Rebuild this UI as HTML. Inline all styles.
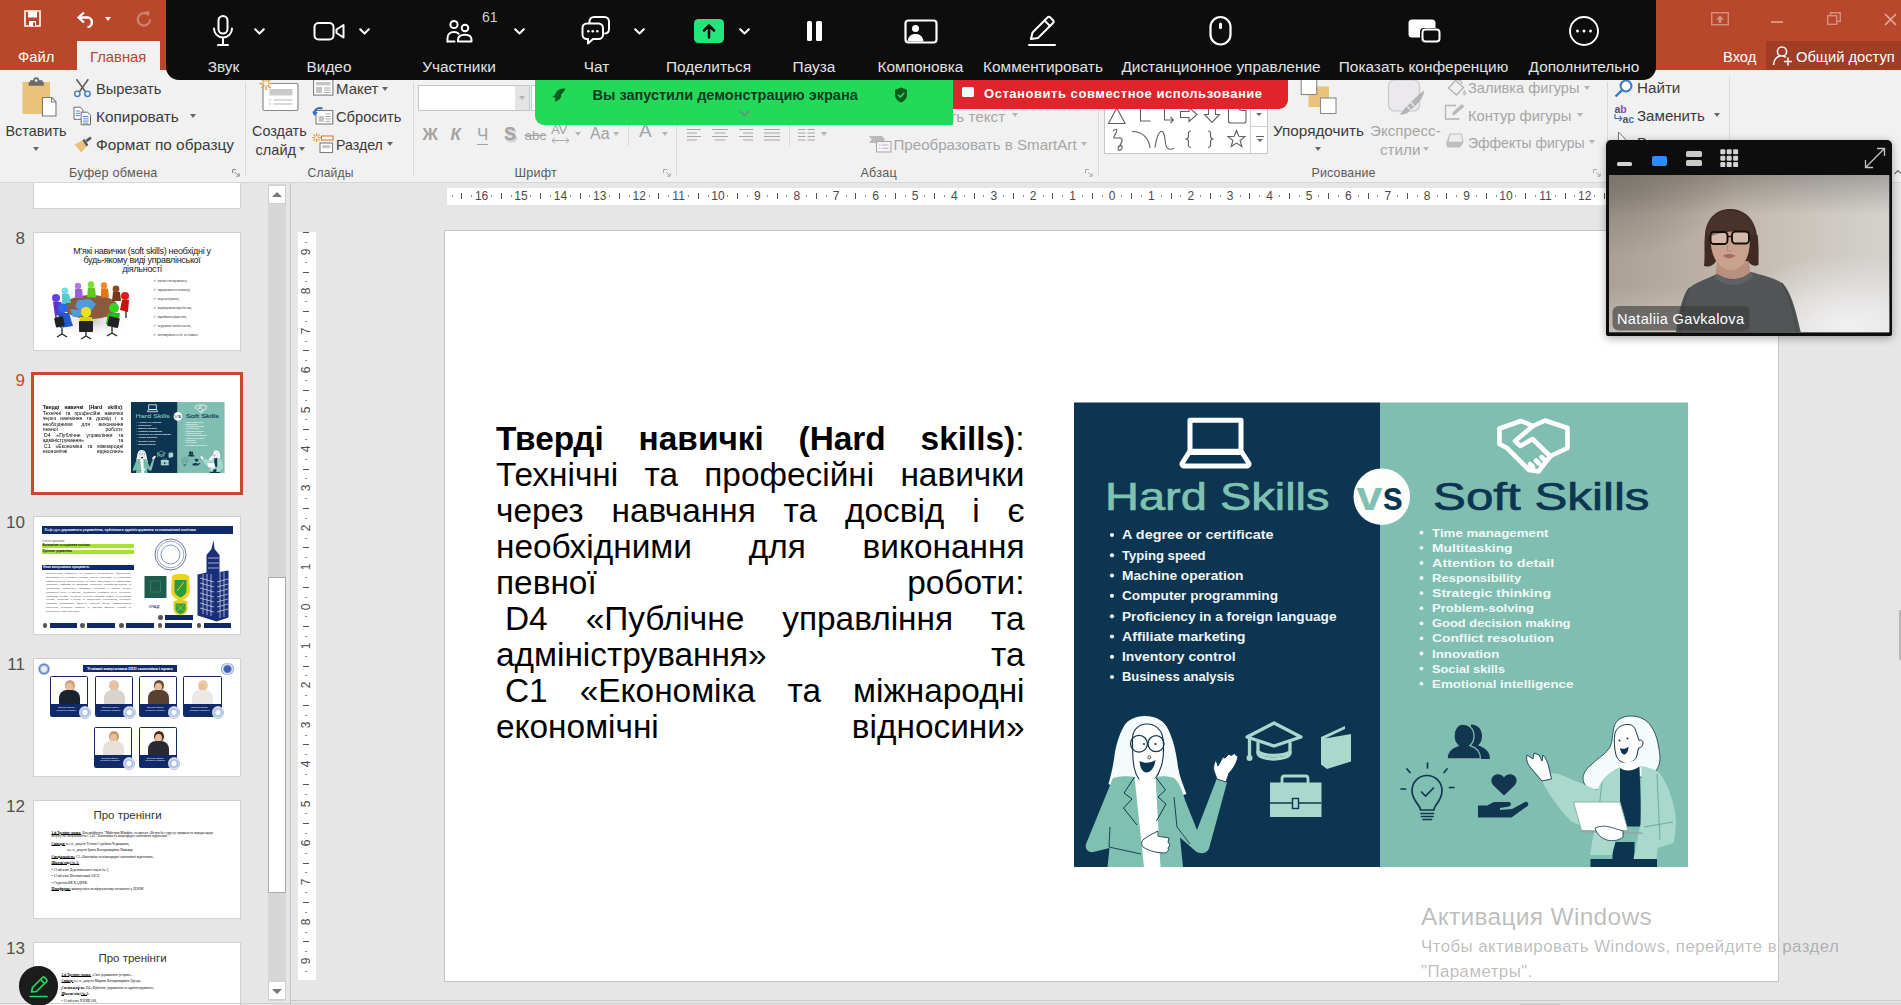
<!DOCTYPE html>
<html lang="ru">
<head>
<meta charset="utf-8">
<title>PowerPoint - Zoom share</title>
<style>
*{box-sizing:border-box;margin:0;padding:0}
html,body{width:1901px;height:1005px;overflow:hidden}
body{position:relative;background:#e6e6e6;font-family:"Liberation Sans","DejaVu Sans",sans-serif;color:#262626}
.abs{position:absolute}
#titlebar{left:0;top:0;width:1901px;height:70px;background:#b9472b}
#ribbon{left:0;top:70px;width:1901px;height:113px;background:#f1f1f1;border-bottom:1px solid #d6d6d6}
.tab{color:#fff;font-size:14.8px;line-height:20px;white-space:nowrap}
.rt{font-size:15px;line-height:18px;white-space:nowrap;color:#3b3b3b}
.rt.dis{color:#a6a6a6}
.rt,.grp{margin-top:1.2px}
.grp{font-size:12.5px;line-height:14px;color:#5a5a5a;white-space:nowrap;letter-spacing:.2px}
.vsep{width:1px;background:#d9d9d9;top:82px;height:94px}
.dd{width:0;height:0;border-left:3.5px solid transparent;border-right:3.5px solid transparent;border-top:4px solid #666}
.dd.dis{border-top-color:#b5b5b5}
#zoombar{left:166px;top:-12px;width:1490px;height:92px;background:#0d0d0d;border-radius:13px}
.zl{color:#e2e2e2;font-size:15.4px;line-height:18px;top:58px;white-space:nowrap;transform:translateX(-50%)}
.zi{stroke:#fff;fill:none;stroke-width:2;stroke-linecap:round;stroke-linejoin:round}
#slide{left:444px;top:230px;width:1335px;height:752px;background:#fff;border:1px solid #c4c4c4}
.sl{position:absolute;left:50px;width:528.5px;font-size:33.4px;line-height:36px;height:36px;text-align:justify;text-align-last:justify;color:#000;white-space:nowrap;overflow:visible}
.sl b{font-weight:bold}
.thumb{left:33px;width:208px;height:119px;background:#fff;border:1px solid #d0d0d0;overflow:hidden}
.t12{font-size:3.450px;line-height:3.600px;color:#000;font-family:"Liberation Serif",serif}
.t12>div{position:absolute;left:0;white-space:nowrap}
.t12 b{text-decoration:underline;text-decoration-thickness:.45px;text-underline-offset:.25px}
.tn{font-size:17px;line-height:20px;color:#4a4a4a;width:30px;text-align:right;left:-5px}
</style>
</head>
<body>

<!-- ===== PowerPoint title bar ===== -->
<div id="titlebar" class="abs">
  <!-- save -->
  <svg class="abs" style="left:24px;top:10px" width="17" height="17" viewBox="0 0 17 17"><path d="M1 1h15v15H1z" fill="none" stroke="#fff" stroke-width="1.6"/><rect x="4" y="1.5" width="9" height="6" fill="#fff"/><rect x="5" y="11" width="7" height="5" fill="#fff"/><rect x="9" y="12.5" width="2" height="3.5" fill="#b9472b"/></svg>
  <!-- undo -->
  <svg class="abs" style="left:76px;top:10px" width="21" height="18" viewBox="0 0 21 18"><path d="M8 2.5 L2.5 7.5 L8 12.5" fill="none" stroke="#fff" stroke-width="2.3" stroke-linejoin="miter"/><path d="M3 7.5h9.5a5 5 0 0 1 0 9.5h-1" fill="none" stroke="#fff" stroke-width="2.3"/></svg>
  <div class="abs" style="left:105px;top:17px;width:0;height:0;border-left:3.5px solid transparent;border-right:3.5px solid transparent;border-top:4px solid #fff"></div>
  <!-- redo (disabled) -->
  <svg class="abs" style="left:135px;top:10px;opacity:.32" width="18" height="18" viewBox="0 0 18 18"><path d="M12.5 4.2A6.2 6.2 0 1 0 15.2 9.5" fill="none" stroke="#fff" stroke-width="2.2"/><path d="M9.5 1.2l5.2 0.4-1.2 5z" fill="#fff"/></svg>
  <div class="abs tab" style="left:18px;top:47px">Файл</div>
  <div class="abs" style="left:77px;top:41px;width:83px;height:30px;background:#f1f1f1"></div>
  <div class="abs tab" style="left:90px;top:47px;color:#b7472a">Главная</div>
  <!-- window controls -->
  <svg class="abs" style="left:1711px;top:12px;opacity:.4" width="18" height="14" viewBox="0 0 18 14"><rect x=".7" y=".7" width="16.6" height="12" fill="none" stroke="#fff" stroke-width="1.4"/><path d="M9 3.5l4 4h-2.6v3.5H7.6V7.5H5z" fill="#fff"/></svg>
  <div class="abs" style="left:1771px;top:21px;width:12px;height:1.6px;background:#fff;opacity:.4"></div>
  <svg class="abs" style="left:1827px;top:12px;opacity:.4" width="14" height="13" viewBox="0 0 14 13"><rect x=".7" y="3.7" width="9" height="8.6" fill="none" stroke="#fff" stroke-width="1.4"/><path d="M3.5 3.5V.7h9.8v8.6h-3" fill="none" stroke="#fff" stroke-width="1.4"/></svg>
  <svg class="abs" style="left:1884px;top:13px;opacity:.55" width="13" height="13" viewBox="0 0 13 13"><path d="M1 1l11 11M12 1L1 12" stroke="#fff" stroke-width="1.7"/></svg>
  <div class="abs tab" style="left:1723px;top:47px;font-size:14.7px">Вход</div>
  <div class="abs" style="left:1766px;top:41px;width:135px;height:29px;background:#9f3d25"></div>
  <svg class="abs" style="left:1772px;top:45px" width="22" height="22" viewBox="0 0 22 22"><circle cx="10" cy="6.5" r="4.6" fill="none" stroke="#fff" stroke-width="1.5"/><path d="M1.5 20c.6-5.4 3.6-8.6 7-9M11 11c1 .2 2 .7 2.8 1.4" fill="none" stroke="#fff" stroke-width="1.5"/><path d="M16 12.5v8M12 16.5h8" stroke="#fff" stroke-width="1.5"/></svg>
  <div class="abs tab" style="left:1796px;top:47px;font-size:14.7px">Общий доступ</div>
</div>
<div id="ribbon" class="abs"></div>

<!-- ===== Ribbon content ===== -->
<div id="rb" class="abs" style="left:0;top:0;width:0;height:0">
  <!-- Clipboard group -->
  <svg class="abs" style="left:21px;top:76px" width="38" height="42" viewBox="0 0 38 42">
    <rect x="1.5" y="6" width="27.5" height="32" fill="#eac278"/>
    <path d="M9 6V4.2h3.2a3 3 0 0 1 6 0H21.5V6h1.3v3.8H7.7V6z" fill="#6b6b6b"/>
    <circle cx="15.2" cy="4.6" r="1.3" fill="#f1f1f1"/>
    <path d="M21.5 21.5h9.2l4.3 4.3V40H21.5z" fill="#fff" stroke="#7a7a7a" stroke-width="1.1"/>
    <path d="M30.5 21.7v4.3H35" fill="none" stroke="#7a7a7a" stroke-width="1"/>
  </svg>
  <div class="abs rt" style="left:5.5px;top:120.6px;font-size:14.4px">Вставить</div>
  <div class="abs dd" style="left:33px;top:147px"></div>
  <!-- scissors -->
  <svg class="abs" style="left:73px;top:78px" width="19" height="20" viewBox="0 0 19 20">
    <path d="M3.5 1.2l8.8 12.3M15.3 1.2L6.6 13.5" stroke="#5e5e5e" stroke-width="1.6" fill="none"/>
    <circle cx="4.3" cy="15.8" r="2.7" fill="none" stroke="#3f7ac2" stroke-width="1.4"/>
    <circle cx="14.5" cy="15.8" r="2.7" fill="none" stroke="#3f7ac2" stroke-width="1.4"/>
  </svg>
  <div class="abs rt" style="left:96px;top:79.3px;font-size:14.7px">Вырезать</div>
  <!-- copy -->
  <svg class="abs" style="left:73px;top:106px" width="19" height="20" viewBox="0 0 19 20">
    <path d="M1 1.2h6.3l2.5 2.5v9.6H1z" fill="#fff" stroke="#6a6a6a" stroke-width="1"/>
    <path d="M2.8 5h4.5M2.8 7.3h4.5M2.8 9.6h4.5" stroke="#3f7ac2" stroke-width=".9"/>
    <path d="M8.2 6.2h6.3l3 3v9.6H8.2z" fill="#fff" stroke="#6a6a6a" stroke-width="1"/>
    <path d="M10 10.5h5.5M10 12.8h5.5M10 15.1h5.5M10 17.2h5.5" stroke="#3f7ac2" stroke-width=".9"/>
  </svg>
  <div class="abs rt" style="left:96px;top:106.8px;font-size:15.4px">Копировать</div>
  <div class="abs dd" style="left:190px;top:114px"></div>
  <!-- format painter -->
  <svg class="abs" style="left:73px;top:135px" width="20" height="19" viewBox="0 0 20 19">
    <path d="M1.5 9.5L9 5.8l4.2 6.2-5 5.5z" fill="#eac278"/>
    <path d="M9.3 5.3l2.3-1.4 3.8 6-2.2 1.5z" fill="#5a5a5a"/>
    <path d="M12.5 5l4.7-3.6 1.6 2.3-4.8 3.5z" fill="#5a5a5a"/>
  </svg>
  <div class="abs rt" style="left:96px;top:134.8px;font-size:15.4px">Формат по образцу</div>
  <div class="abs grp" style="left:69px;top:165px;font-size:12.7px">Буфер обмена</div>
  <svg class="abs" style="left:232px;top:169px" width="8" height="8" viewBox="0 0 8 8"><path d="M.5 4V.5H4M3.2 3.2l3.8 3.8M7.2 4.2v3h-3" fill="none" stroke="#8a8a8a" stroke-width="1"/></svg>
  <div class="abs vsep" style="left:245px"></div>

  <!-- Slides group -->
  <svg class="abs" style="left:258px;top:76px" width="42" height="37" viewBox="0 0 42 37">
    <rect x="5" y="7.5" width="35" height="27" rx="1.5" fill="#fff" stroke="#8a8a8a" stroke-width="1.2"/>
    <rect x="11.5" y="13" width="23" height="6.5" fill="#c9c9c9"/>
    <path d="M11 24h2M15.5 24h19M11 28h2M15.5 28h19" stroke="#b5b5b5" stroke-width="1.1"/>
    <g stroke="#e9a23b" stroke-width="1.5"><path d="M8 1v13M1.5 7.5h13M3.4 2.9l9.2 9.2M12.6 2.9l-9.2 9.2"/></g>
    <circle cx="8" cy="7.5" r="2.4" fill="#f1f1f1"/>
  </svg>
  <div class="abs rt" style="left:252px;top:120.6px;font-size:14.4px">Создать</div>
  <div class="abs rt" style="left:255.5px;top:139.8px;font-size:14.6px">слайд</div>
  <div class="abs dd" style="left:298.5px;top:147px"></div>
  <!-- layout -->
  <svg class="abs" style="left:313px;top:79px" width="21" height="17" viewBox="0 0 21 17">
    <rect x=".6" y=".6" width="19.3" height="15.5" fill="#fff" stroke="#7d7d7d" stroke-width="1.1"/>
    <rect x="3" y="3" width="14.5" height="3.4" fill="#c4c4c4"/>
    <rect x="3" y="8" width="6" height="6" fill="#c4c4c4"/>
    <path d="M11 9h6.5M11 11.2h6.5M11 13.4h6.5" stroke="#9a9a9a" stroke-width=".9"/>
  </svg>
  <div class="abs rt" style="left:336px;top:79.3px">Макет</div>
  <div class="abs dd" style="left:381.5px;top:86.5px"></div>
  <!-- reset -->
  <svg class="abs" style="left:312px;top:105px" width="22" height="20" viewBox="0 0 22 20">
    <rect x="4" y="5.5" width="16.8" height="13.5" fill="#fff" stroke="#7d7d7d" stroke-width="1.1"/>
    <rect x="6.5" y="11" width="5.5" height="5.8" fill="#c4c4c4"/>
    <path d="M13.5 9h5M13.5 11.5h5M13.5 14h5M13.5 16.4h5" stroke="#9a9a9a" stroke-width=".9"/>
    <path d="M2.2 9.2C2 4.5 6 2 10.5 3.5" fill="none" stroke="#2f6fbf" stroke-width="1.9"/>
    <path d="M0 6.5l2.6 4.4 3.2-3.6z" fill="#2f6fbf"/>
  </svg>
  <div class="abs rt" style="left:336px;top:106.8px;font-size:14.7px">Сбросить</div>
  <!-- section -->
  <svg class="abs" style="left:312px;top:133px" width="22" height="21" viewBox="0 0 22 21">
    <g stroke="#e9a23b" stroke-width="1.2"><path d="M4.5 0v9M0 4.5h9M1.3 1.3l6.4 6.4M7.7 1.3L1.3 7.7"/></g>
    <circle cx="4.5" cy="4.500" r="1.6" fill="#f1f1f1"/>
    <rect x="9.5" y="3" width="11.5" height="4" fill="#fff" stroke="#e4763a" stroke-width="1.1"/>
    <rect x="8" y="10" width="12.5" height="9.5" fill="#fff" stroke="#7d7d7d" stroke-width="1.1"/>
    <rect x="10.300" y="12.200" width="8" height="3" fill="#c4c4c4"/>
  </svg>
  <div class="abs rt" style="left:336px;top:134.8px;font-size:14.2px">Раздел</div>
  <div class="abs dd" style="left:386.5px;top:142px"></div>
  <div class="abs grp" style="left:307.5px;top:165px;font-size:12.1px">Слайды</div>
  <div class="abs vsep" style="left:413px"></div>

  <!-- Font group -->
  <div class="abs" style="left:418px;top:85px;width:112px;height:26px;background:#fff;border:1px solid #c6c6c6"></div>
  <div class="abs" style="left:515px;top:86px;width:14px;height:24px;background:#e4e4e4"></div>
  <div class="abs dd dis" style="left:518.500px;top:96px"></div>
  <div class="abs" style="left:531px;top:85px;width:30px;height:26px;background:#fff;border:1px solid #c6c6c6"></div>
  <div class="abs" style="left:422.5px;top:125px;font-size:17px;line-height:20px;font-weight:bold;color:#a3a3a3">Ж</div>
  <div class="abs" style="left:450.5px;top:125px;font-size:17px;line-height:20px;font-weight:bold;font-style:italic;color:#a3a3a3">К</div>
  <div class="abs" style="left:477px;top:125px;font-size:17px;line-height:20px;color:#a3a3a3;border-bottom:1.300px solid #a3a3a3;height:19.500px">Ч</div>
  <div class="abs" style="left:504px;top:124px;font-size:18px;line-height:20px;font-weight:bold;color:#a3a3a3;text-shadow:1.500px 1.500px 1.500px #c9c9c9">S</div>
  <div class="abs" style="left:524.5px;top:126px;font-size:13.5px;line-height:20px;color:#a3a3a3;text-decoration:line-through">abc</div>
  <div class="abs" style="left:551px;top:121.500px;font-size:13.5px;line-height:16px;color:#a3a3a3;letter-spacing:-.5px">AV</div>
  <svg class="abs" style="left:551px;top:137px" width="19" height="7" viewBox="0 0 19 7"><path d="M1 3.500h17M4 .8L1 3.500l3 2.700M15 .8l3 2.700-3 2.700" fill="none" stroke="#a9a9a9" stroke-width="1"/></svg>
  <div class="abs dd dis" style="left:575px;top:132px"></div>
  <div class="abs" style="left:590px;top:124px;font-size:16px;line-height:20px;color:#a3a3a3">Aa</div>
  <div class="abs dd dis" style="left:613px;top:132px"></div>
  <div class="abs" style="left:628px;top:125px;width:1px;height:21px;background:#d9d9d9"></div>
  <div class="abs" style="left:639px;top:120px;font-size:19px;line-height:22px;color:#a3a3a3">A</div>
  <div class="abs dd dis" style="left:661.500px;top:132px"></div>
  <div class="abs grp" style="left:514.5px;top:165px;font-size:12.6px">Шрифт</div>
  <svg class="abs" style="left:663px;top:169px" width="8" height="8" viewBox="0 0 8 8"><path d="M.5 4V.5H4M3.2 3.2l3.8 3.8M7.2 4.2v3h-3" fill="none" stroke="#a9a9a9" stroke-width="1"/></svg>
  <div class="abs vsep" style="left:676px"></div>
  <!-- Paragraph group -->
  <svg class="abs" style="left:686px;top:129px" width="132" height="13" viewBox="0 0 132 13">
    <g stroke="#a6a6a6" stroke-width="1" fill="none">
      <path d="M1 .5h14M1 4h10M1 7.500h14M1 11h10"/>
      <path d="M26 .5h16M28.500 4h11M26 7.500h16M28.500 11h11"/>
      <path d="M53 .5h14M57 4h10M53 7.500h14M57 11h10"/>
      <path d="M78 .5h16M78 4h16M78 7.500h16M78 11h16"/>
      <path d="M112 .5h7.500M121.500 .5h7.500M112 4h7.500M121.500 4h7.500M112 7.500h7.500M121.500 7.500h7.500M112 11h7.500M121.500 11h7.500"/>
    </g>
  </svg>
  <div class="abs" style="left:789px;top:125px;width:1px;height:21px;background:#d9d9d9"></div>
  <div class="abs dd dis" style="left:820.5px;top:132px"></div>
  <div class="abs rt dis" style="left:941px;top:106.5px;font-size:15.3px">ать текст</div>
  <div class="abs dd dis" style="left:1012px;top:113px"></div>
  <svg class="abs" style="left:869px;top:136px" width="23" height="17" viewBox="0 0 23 17">
    <path d="M0 0h13l3 3.500-3 3.500H0l2.800-3.500z" fill="#b9b9b9"/>
    <rect x="7.500" y="5.500" width="14.500" height="10.500" fill="#f6f6f6" stroke="#a9a9a9" stroke-width="1.1"/>
    <path d="M10 9h1.500M13 9h6.500M10 12.300h1.500M13 12.300h6.500" stroke="#c9a9c9" stroke-width="1"/>
  </svg>
  <div class="abs rt dis" style="left:893.5px;top:134.8px;font-size:15.1px">Преобразовать в SmartArt</div>
  <div class="abs dd dis" style="left:1081px;top:142px"></div>
  <div class="abs grp" style="left:860.5px;top:165px;font-size:12.6px">Абзац</div>
  <svg class="abs" style="left:1085px;top:169px" width="8" height="8" viewBox="0 0 8 8"><path d="M.5 4V.5H4M3.2 3.2l3.8 3.800M7.200 4.200v3h-3" fill="none" stroke="#a9a9a9" stroke-width="1"/></svg>
  <div class="abs vsep" style="left:1098px"></div>

  <!-- Drawing group : shapes gallery -->
  <div class="abs" style="left:1104px;top:82px;width:164px;height:72px;background:#fff;border:1px solid #c6c6c6"></div>
  <div class="abs" style="left:1250px;top:83px;width:1px;height:70px;background:#d0d0d0"></div>
  <div class="abs" style="left:1251px;top:126px;width:16px;height:1px;background:#d0d0d0"></div>
  <svg class="abs" style="left:1105px;top:104px" width="146" height="48" viewBox="0 0 146 48">
    <g fill="none" stroke="#5f5f5f" stroke-width="1.100" stroke-linejoin="miter">
      <path d="M3.500 19.500L11.800 4l8.300 15.500z"/>
      <path d="M35.500 3v14h10"/>
      <path d="M59.500 3v13h8.500M65.500 13l2.800 3-2.800 3"/>
      <path d="M75.500 7.500h8.500V3.500l8 7-8 7v-4h-8.500z"/>
      <path d="M103.500 3.500h7v7h4l-7.500 8-7.500-8h4z"/>
      <path d="M123.500 3.500h10.500a3 3 0 0 0 3 3h4v10.500a2 2 0 0 1-2 2h-13.500a2 2 0 0 1-2-2z"/>
      <path d="M8 27c3-3 5-2 3 2s-4 5 0 5 7-1 6 3-4 6-4 8 3 2 4-1-2-3-4-1"/>
      <path d="M27 27.500c10 0 17 6 18 16.500"/>
      <path d="M50 43.500c3-20 9-20 10-8s5 10 9 9"/>
      <path d="M86 27c-3.500 0-2.500 3-2.500 5s-1 3-3 3c2 0 3 1 3 3s-1 5.500 2.500 5.500"/>
      <path d="M103 27c3.500 0 2.500 3 2.500 5s1 3 3 3c-2 0-3 1-3 3s1 5.500-2.500 5.500"/>
      <path d="M131.500 26.500l2.300 5.800 6.200.3-4.900 3.900 1.700 6-5.300-3.400-5.300 3.400 1.700-6-4.900-3.900 6.200-.3z"/>
    </g>
  </svg>
  <div class="abs dd" style="left:1256px;top:113px;border-left-width:3px;border-right-width:3px;border-top-width:3.500px"></div>
  <div class="abs" style="left:1255.500px;top:135.500px;width:8px;height:1.300px;background:#666"></div>
  <div class="abs dd" style="left:1256.5px;top:139px;border-left-width:3px;border-right-width:3px;border-top-width:3.500px"></div>
  <!-- arrange -->
  <svg class="abs" style="left:1300px;top:76px" width="38" height="40" viewBox="0 0 38 40">
    <rect x="8.500" y="10.500" width="20.500" height="20.500" fill="#eac278"/>
    <rect x="1.200" y="3" width="15.500" height="15.500" fill="#fff" stroke="#8a8a8a" stroke-width="1.100"/>
    <rect x="20.500" y="22" width="15.500" height="15.500" fill="#fff" stroke="#8a8a8a" stroke-width="1.100"/>
  </svg>
  <div class="abs rt" style="left:1273px;top:120.6px;font-size:15.3px">Упорядочить</div>
  <div class="abs dd" style="left:1315px;top:147px"></div>
  <!-- quick styles -->
  <svg class="abs" style="left:1386px;top:78px" width="40" height="40" viewBox="0 0 40 40">
    <rect x="2.500" y="2" width="31" height="31" rx="6" fill="#ebe8ee" stroke="#c9c9c9" stroke-width="1.200"/>
    <path d="M38 12.500c.5 6-6 13.500-13 19l-3.500-3.800C27 22 34 15 38 12.500z" fill="#b4b4b4"/>
    <path d="M20.500 28.500l3.500 3.700c-1.500 3.500-6 4.500-11 4.300 3-1.500 4.500-5 7.500-8z" fill="#b4b4b4"/>
    <path d="M24.500 24.200l3.600 3.800" stroke="#ebe8ee" stroke-width="1.400"/>
  </svg>
  <div class="abs rt dis" style="left:1370px;top:120.6px;font-size:15.2px">Экспресс-</div>
  <div class="abs rt dis" style="left:1380px;top:139.8px;font-size:15.2px">стили</div>
  <div class="abs dd dis" style="left:1422.500px;top:147px"></div>
  <!-- shape fill/outline/effects -->
  <svg class="abs" style="left:1447px;top:79px" width="20" height="19" viewBox="0 0 20 19"><path d="M8.500 1.500l8 7-7 7.500-8-7z" fill="none" stroke="#b3b3b3" stroke-width="1.300"/><path d="M10 1c3-.8 5 1 4.500 4" fill="none" stroke="#b3b3b3" stroke-width="1.200"/><path d="M17.500 10.500c1.300 2 1.800 3 1.800 4a1.700 1.700 0 0 1-3.500 0c0-1 .5-2 1.700-4z" fill="#c4c4c4"/></svg>
  <div class="abs rt dis" style="left:1468px;top:78.3px;font-size:14.600px">Заливка фигуры</div>
  <div class="abs dd dis" style="left:1583.500px;top:85.5px"></div>
  <svg class="abs" style="left:1444px;top:103px" width="22" height="19" viewBox="0 0 22 19"><path d="M12 2.500H1.500v13.500h14" fill="none" stroke="#b3b3b3" stroke-width="1.300"/><path d="M8 12.500l1-3.500 9-8 2.300 2.500-9 8z" fill="#b9b9b9"/></svg>
  <div class="abs rt dis" style="left:1468px;top:105.8px;font-size:14.800px">Контур фигуры</div>
  <div class="abs dd dis" style="left:1576.500px;top:113px"></div>
  <svg class="abs" style="left:1445px;top:132px" width="20" height="17" viewBox="0 0 20 17"><path d="M4.500 1.500h12.500l1.500 9-3.500 5H2.500L1 11.500z" fill="#bdbdbd"/><path d="M5.200 2.500h11l1 7.300H3.500z" fill="#ececec"/></svg>
  <div class="abs rt dis" style="left:1468px;top:132.6px;font-size:14px">Эффекты фигуры</div>
  <div class="abs dd dis" style="left:1588.500px;top:140px"></div>
  <div class="abs grp" style="left:1311.5px;top:165px;font-size:12.4px">Рисование</div>
  <svg class="abs" style="left:1593px;top:169px" width="8" height="8" viewBox="0 0 8 8"><path d="M.5 4V.5H4M3.200 3.200l3.800 3.800M7.200 4.200v3h-3" fill="none" stroke="#a9a9a9" stroke-width="1"/></svg>
  <div class="abs vsep" style="left:1606.5px"></div>

  <!-- Editing group -->
  <svg class="abs" style="left:1614px;top:79px" width="20" height="19" viewBox="0 0 20 19"><circle cx="12" cy="7" r="5.400" fill="#fff" stroke="#3b78c3" stroke-width="2"/><path d="M8 11.200L1.500 17.500" stroke="#3b78c3" stroke-width="2.400"/></svg>
  <div class="abs rt" style="left:1637px;top:78.3px;font-size:15.200px">Найти</div>
  <div class="abs" style="left:1614.500px;top:104px;font-size:10.500px;line-height:10px;color:#555;font-weight:bold">a<span style="color:#8b4fa5">b</span></div>
  <div class="abs" style="left:1622.500px;top:114px;font-size:10.500px;line-height:10px;color:#555;font-weight:bold">a<span style="color:#3b78c3">c</span></div>
  <svg class="abs" style="left:1614px;top:114px" width="9" height="9" viewBox="0 0 9 9"><path d="M1 0v4.500h6.500M5.500 2l2.300 2.500L5.500 7" fill="none" stroke="#3b78c3" stroke-width="1.200"/></svg>
  <div class="abs rt" style="left:1637px;top:105.8px;font-size:15.100px">Заменить</div>
  <div class="abs dd" style="left:1713.500px;top:113px"></div>
  <svg class="abs" style="left:1617px;top:131px" width="12" height="14" viewBox="0 0 12 14"><path d="M1.500 1l8.500 9H5.500L1.500 13z" fill="#fff" stroke="#777" stroke-width="1"/></svg>
  <div class="abs rt" style="left:1637px;top:133.200px;font-size:15.100px">Выделить</div>
  <div class="abs dd" style="left:1710px;top:141px"></div>
  <div class="abs vsep" style="left:1729px;top:76px;height:100px"></div>
</div>

<!-- ===== slide pane / workspace ===== -->
<!-- ===== slide thumbnails pane ===== -->
<div id="pane" class="abs" style="left:0;top:183px;width:290px;height:822px;overflow:hidden">
 <div class="abs" style="left:0;top:-183px;width:0;height:0">
  <div class="abs tn" style="top:228.5px;color:#505050">8</div>
  <div class="abs tn" style="top:370.5px;color:#c8492c">9</div>
  <div class="abs tn" style="top:512.5px;color:#505050">10</div>
  <div class="abs tn" style="top:654.5px;color:#505050">11</div>
  <div class="abs tn" style="top:796.5px;color:#505050">12</div>
  <div class="abs tn" style="top:938.5px;color:#505050">13</div>
  <div class="abs thumb" style="top:90px"></div>
  <div class="abs thumb" style="top:232px">
    <div class="abs" style="left:0;top:13.5px;width:208px;text-align:center;font-size:9px;line-height:9px;color:#222;letter-spacing:-.3px;transform:translateX(4px)">М’які навички (soft skills) необхідні у<br>будь-якому виді управлінської<br>діяльності</div>
    <svg class="abs" style="left:14px;top:48px" width="90" height="60" viewBox="0 0 90 60">
      <defs><radialGradient id="shd" cx="50%" cy="50%" r="50%"><stop offset="0" stop-color="#9a9a9a" stop-opacity=".55"/><stop offset="1" stop-color="#fff" stop-opacity="0"/></radialGradient></defs>
      <ellipse cx="44" cy="40" rx="42" ry="18" fill="url(#shd)"/>
      <ellipse cx="43" cy="26" rx="27" ry="12" fill="#8a5a3c"/>
      <path d="M30 19l12-1 6 5-4 6-12 1-5-5z" fill="#4f9be0"/><path d="M22 28l10 1 2 6-9 1z" fill="#4f9be0"/>
      <g><circle cx="8" cy="17" r="4" fill="#6a3fe0"/><path d="M5 21h8l4 12-10 2z" fill="#5b35d0"/>
      <circle cx="17" cy="10" r="3.4" fill="#6fe0e0"/><path d="M14 13h7l2 9h-9z" fill="#55c8d0"/>
      <circle cx="30" cy="5" r="3.2" fill="#b07be8"/><path d="M27 8h7l1 9h-8z" fill="#9a62d8"/>
      <circle cx="43" cy="3.500" r="3.2" fill="#7be030"/><path d="M40 6.500h7l1 10h-9z" fill="#62c81e"/>
      <circle cx="56" cy="4.500" r="3.200" fill="#f08a2a"/><path d="M53 7.500h7l1 9h-8z" fill="#e07818"/>
      <circle cx="68" cy="8" r="3.400" fill="#8a4a22"/><path d="M65 11h7l1 9h-9z" fill="#74391a"/>
      <circle cx="77" cy="15" r="4" fill="#e01a1a"/><path d="M74 19h7l-1 12-8-2z" fill="#c81010"/>
      <circle cx="15" cy="27" r="4.800" fill="#2a6ae8"/><path d="M10 32h11l4 13-13 2z" fill="#1f58d0"/>
      <circle cx="38" cy="31" r="5.200" fill="#e8e020"/><path d="M32 36h12l1 14h-14z" fill="#d8cf10"/>
      <circle cx="66" cy="27" r="5" fill="#38d028"/><path d="M60 32h12l-2 14-12-3z" fill="#28b818"/></g>
      <g stroke="#222" stroke-width="1.300" fill="none"><path d="M14 47v6M9 56l5-3 5 3M38 50v5M33 58l5-3 5 3M64 46v6M59 55l5-3 5 3M78 30v7M8 35v8"/></g>
      <g fill="#222"><rect x="31" y="40" width="14" height="11" rx="1"/><rect x="7" y="36" width="9" height="10" rx="1" transform="rotate(-12 11 41)"/><rect x="60" y="36" width="11" height="10" rx="1" transform="rotate(12 65 41)"/></g>
    </svg>
    <div class="abs" style="left:119px;top:45.3px;font-size:3.6px;line-height:5px;color:#333;white-space:nowrap;font-family:'Liberation Serif',serif"><span style="font-size:4px">✓</span>&nbsp; вміти спілкуватись,</div>
    <div class="abs" style="left:119px;top:54.3px;font-size:3.6px;line-height:5px;color:#333;white-space:nowrap;font-family:'Liberation Serif',serif"><span style="font-size:4px">✓</span>&nbsp; працювати в команді,</div>
    <div class="abs" style="left:119px;top:63.3px;font-size:3.6px;line-height:5px;color:#333;white-space:nowrap;font-family:'Liberation Serif',serif"><span style="font-size:4px">✓</span>&nbsp; переконувати,</div>
    <div class="abs" style="left:119px;top:72.3px;font-size:3.6px;line-height:5px;color:#333;white-space:nowrap;font-family:'Liberation Serif',serif"><span style="font-size:4px">✓</span>&nbsp; вирішувати проблеми,</div>
    <div class="abs" style="left:119px;top:81.3px;font-size:3.6px;line-height:5px;color:#333;white-space:nowrap;font-family:'Liberation Serif',serif"><span style="font-size:4px">✓</span>&nbsp; приймати рішення,</div>
    <div class="abs" style="left:119px;top:90.3px;font-size:3.6px;line-height:5px;color:#333;white-space:nowrap;font-family:'Liberation Serif',serif"><span style="font-size:4px">✓</span>&nbsp; керувати своїм часом,</div>
    <div class="abs" style="left:119px;top:99.3px;font-size:3.6px;line-height:5px;color:#333;white-space:nowrap;font-family:'Liberation Serif',serif"><span style="font-size:4px">✓</span>&nbsp; мотивувати себе та інших.</div>
  </div>
  <div class="abs" style="left:31.200px;top:372.200px;width:211.500px;height:122.500px;background:#c8492c"></div>
  <div class="abs thumb" style="top:375px;border:none;left:34px;width:206px;height:116.800px">
    <div class="abs" style="left:1.200px;top:1.200px;width:1334px;height:751px;transform-origin:0 0;transform:scale(.1527)">
      <div class="sl" style="top:189px"><b>Тверді навичкі (Hard skills)</b>:</div>
      <div class="sl" style="top:225px">Технічні та професійні навички</div>
      <div class="sl" style="top:261px">через навчання та досвід і є</div>
      <div class="sl" style="top:297px">необхідними для виконання</div>
      <div class="sl" style="top:333px">певної роботи:</div>
      <div class="sl" style="top:369px;padding-left:9px">D4 «Публічне управління та</div>
      <div class="sl" style="top:405px">адміністрування» та</div>
      <div class="sl" style="top:441px;padding-left:9px">С1 «Економіка та міжнародні</div>
      <div class="sl" style="top:477px">економічні відносини»</div>
      <svg class="abs" style="left:628px;top:170px" width="614" height="465" viewBox="0 0 614 465"><use href="#infog"/></svg>
    </div>
  </div>
  <div class="abs thumb" style="top:516px"><div class="abs" style="left:-1px;top:-1px;width:0;height:0">
    <div class="abs" style="left:9px;top:9.500px;width:190.500px;height:8px;background:#10296b"></div>
    <div class="abs" style="left:11.500px;top:10.500px;font-size:4.300px;line-height:6px;color:#fff;white-space:nowrap;font-family:'Liberation Serif',serif">Кафедра <b style="font-family:'Liberation Sans',sans-serif;font-size:3.500px">державного управління, публічного адміністрування та економічної політики</b></div>
    <div class="abs" style="left:9px;top:22.500px;font-size:2.800px;line-height:4px;color:#666;white-space:nowrap">Освітні програми:</div>
    <div class="abs" style="left:9px;top:28px;width:92px;height:3.800px;background:#a5e32f"></div>
    <div class="abs" style="left:9.500px;top:28px;font-size:2.800px;line-height:3.800px;color:#111;font-weight:bold;white-space:nowrap">Економічна та соціальна політика</div>
    <div class="abs" style="left:9px;top:34px;width:92px;height:3.800px;background:#a5e32f"></div>
    <div class="abs" style="left:9.500px;top:34px;font-size:2.800px;line-height:3.800px;color:#111;font-weight:bold;white-space:nowrap">Публічне управління</div>
    <div class="abs" style="left:9px;top:48.500px;width:92px;height:5.800px;background:#10296b"></div>
    <div class="abs" style="left:10px;top:49px;font-size:3.300px;line-height:5px;color:#fff;font-weight:bold;white-space:nowrap">Наші випускники працюють:</div>
    <div class="abs" style="left:13px;top:56px;width:85px;font-size:2.750px;line-height:3.750px;color:#1a1a1a;text-align:justify;font-family:'Liberation Serif',serif">спеціалістами провідних та головних підприємства, банківських, фінансових та страхових установ, органів місцевого та державного самоврядування, органів влади та інших організацій та промислової діяльності, роботою за кордоном; начальник науково-дослідного та державного управління, посадовий інспектор з аналізу ринків, державний агент із закупок, державний страховий агент, спеціаліст державної служби, спеціаліст з питань кадрової роботи та державної служби, інспектор з кадрів та соціального страхування, керуючий справами виконавчого комітету, секретар органу самоорганізації населення, керівники проектів та програм, фахівець установ та організацій, публічної влади.</div>
    <svg class="abs" style="left:108px;top:20px" width="95" height="95" viewBox="0 0 95 95">
      <circle cx="29.500" cy="18.500" r="15.500" fill="#fff" stroke="#3b4f8f" stroke-width=".8"/><circle cx="29.500" cy="18.500" r="13.300" fill="none" stroke="#3b4f8f" stroke-width=".5"/><circle cx="29.500" cy="18.500" r="9.500" fill="none" stroke="#3b4f8f" stroke-width=".6"/>
      <rect x="3.500" y="40" width="22" height="22" fill="#1f5b4b"/><rect x="9.500" y="45" width="10" height="11" fill="none" stroke="#4f8b78" stroke-width=".6"/>
      <path d="M31 40c3-3 14-3 17 0l1 14c0 6-4 9-9.500 11C34 63 30 60 30 54z" fill="#f0d21e"/><path d="M33.500 44h12v10c0 4-3 6-6 7.500-3-1.500-6-3.500-6-7.500z" fill="#2a9a3c"/><path d="M36 55l7-9" stroke="#f0d21e" stroke-width="1"/>
      <path d="M32.500 65.500c2-2 12-2 14 0v7c0 4-3 6-7 7-4-1-7-3-7-7z" fill="#e0d020"/><path d="M34.500 67.500h10v5c0 3-2 4.500-5 5.500-3-1-5-2.500-5-5.500z" fill="#32a040"/><path d="M36.500 75l6-6M36.500 69l6 6" stroke="#e0d020" stroke-width=".7"/>
      <g fill="#1a2f7a"><path d="M72.500 4l1 9 5 6v17l9-1.500v47l-12 4-19-6V38.500l9-2V19l5-6z"/></g>
      <g stroke="#fff" stroke-width=".7" opacity=".85"><path d="M59 42l14 4M59 47l14 4M59 52l14 4M59 57l14 4M59 62l14 4M59 67l14 4M59 72l14 4M76 46l11-3M76 51l11-3M76 56l11-3M76 61l11-3M76 66l11-3M76 71l11-3M76 76l11-3M62 38v40M66 38v41M70 38v42M79 36v46M83 36v45M67 22h11M67 27h11M67 32h11"/></g>
      <text x="8" y="72" font-size="3.200" fill="#2a3f9a" font-weight="bold" font-family="Liberation Sans, sans-serif">ОЧАДІ</text>
    </svg>
    <div class="abs" style="left:131.500px;top:98.500px;width:28px;height:5.500px;background:#10296b"></div>
    <div class="abs" style="left:16.5px;top:107px;width:27.500px;height:5.300px;background:#10296b"></div><div class="abs" style="left:9.5px;top:107.300px;width:4.500px;height:4.500px;border-radius:50%;background:#555"></div>
    <div class="abs" style="left:54.3px;top:107px;width:27.500px;height:5.300px;background:#10296b"></div><div class="abs" style="left:47.3px;top:107.300px;width:4.500px;height:4.500px;border-radius:50%;background:#555"></div>
    <div class="abs" style="left:93px;top:107px;width:27.500px;height:5.300px;background:#10296b"></div><div class="abs" style="left:86px;top:107.300px;width:4.500px;height:4.500px;border-radius:50%;background:#555"></div>
    <div class="abs" style="left:131.5px;top:107px;width:27.500px;height:5.300px;background:#10296b"></div><div class="abs" style="left:124.5px;top:107.300px;width:4.500px;height:4.500px;border-radius:50%;background:#555"></div>
    <div class="abs" style="left:170.7px;top:107px;width:27.500px;height:5.300px;background:#10296b"></div><div class="abs" style="left:163.7px;top:107.300px;width:4.500px;height:4.500px;border-radius:50%;background:#555"></div>
    <div class="abs" style="left:125px;top:99px;width:4.500px;height:4.500px;border-radius:50%;background:#555"></div>
  </div></div>
  <div class="abs thumb" style="top:658px"><div class="abs" style="left:-1px;top:-1.200px;width:0;height:0">
    <div class="abs" style="left:50px;top:7.500px;width:93.500px;height:6.800px;background:#10296b"></div>
    <div class="abs" style="left:50px;top:8px;width:93.500px;text-align:center;font-size:4.300px;line-height:6px;color:#fff;font-weight:bold;white-space:nowrap;font-family:'Liberation Serif',serif">Успішні випускники ННІ економіки і права</div>
    <div class="abs" style="left:4.500px;top:5px;width:12.500px;height:12.500px;border-radius:50%;background:radial-gradient(circle,#e8eef8 30%,#5f7fc0 55%,#dfe6f4 75%)"></div>
    <div class="abs" style="left:188px;top:5px;width:12.500px;height:12.500px;border-radius:50%;background:radial-gradient(circle,#3f5fb0 35%,#e8eef8 55%,#5f7fc0 75%)"></div>
    <div class="abs" style="left:17.3px;top:18px;width:38.200px;height:41px;border:.8px solid #10296b;border-radius:1.500px;background:#fff;overflow:hidden">
      <div class="abs" style="left:13.500px;top:3.500px;width:10px;height:11px;border-radius:50%;background:#c9a07a"></div>
      <div class="abs" style="left:15px;top:6px;width:7px;height:8.500px;border-radius:50%;background:#e8c0a0"></div>
      <div class="abs" style="left:8px;top:13px;width:21px;height:20px;border-radius:8px 8px 0 0;background:#1a2230"></div>
      <div class="abs" style="left:0;top:27px;width:38px;height:14px;background:#10296b"></div>
      <div class="abs" style="left:2px;top:29.500px;width:26px;font-size:1.800px;line-height:2.200px;color:#fff;text-align:center">Випускник кафедри державного управління</div>
    </div>
    <div class="abs" style="left:45.8px;top:48.5px;width:12.500px;height:12.500px;border-radius:50%;background:radial-gradient(circle,#fff 25%,#9fb4dc 50%,#e8eef8 70%);border:.5px solid #b8c4dc"></div>
    <div class="abs" style="left:61.5px;top:18px;width:38.200px;height:41px;border:.8px solid #10296b;border-radius:1.500px;background:#fff;overflow:hidden">
      <div class="abs" style="left:13.500px;top:3.500px;width:10px;height:11px;border-radius:50%;background:#e0c9a8"></div>
      <div class="abs" style="left:15px;top:6px;width:7px;height:8.500px;border-radius:50%;background:#e8c0a0"></div>
      <div class="abs" style="left:8px;top:13px;width:21px;height:20px;border-radius:8px 8px 0 0;background:#d9d3d0"></div>
      <div class="abs" style="left:0;top:27px;width:38px;height:14px;background:#10296b"></div>
      <div class="abs" style="left:2px;top:29.500px;width:26px;font-size:1.800px;line-height:2.200px;color:#fff;text-align:center">Випускник кафедри державного управління</div>
    </div>
    <div class="abs" style="left:90.0px;top:48.5px;width:12.500px;height:12.500px;border-radius:50%;background:radial-gradient(circle,#fff 25%,#9fb4dc 50%,#e8eef8 70%);border:.5px solid #b8c4dc"></div>
    <div class="abs" style="left:106.3px;top:18px;width:38.200px;height:41px;border:.8px solid #10296b;border-radius:1.500px;background:#fff;overflow:hidden">
      <div class="abs" style="left:13.500px;top:3.500px;width:10px;height:11px;border-radius:50%;background:#6a4a34"></div>
      <div class="abs" style="left:15px;top:6px;width:7px;height:8.500px;border-radius:50%;background:#e8c0a0"></div>
      <div class="abs" style="left:8px;top:13px;width:21px;height:20px;border-radius:8px 8px 0 0;background:#5a4030"></div>
      <div class="abs" style="left:0;top:27px;width:38px;height:14px;background:#10296b"></div>
      <div class="abs" style="left:2px;top:29.500px;width:26px;font-size:1.800px;line-height:2.200px;color:#fff;text-align:center">Випускник кафедри державного управління</div>
    </div>
    <div class="abs" style="left:134.8px;top:48.5px;width:12.500px;height:12.500px;border-radius:50%;background:radial-gradient(circle,#fff 25%,#9fb4dc 50%,#e8eef8 70%);border:.5px solid #b8c4dc"></div>
    <div class="abs" style="left:150.4px;top:18px;width:38.200px;height:41px;border:.8px solid #10296b;border-radius:1.500px;background:#fff;overflow:hidden">
      <div class="abs" style="left:13.500px;top:3.500px;width:10px;height:11px;border-radius:50%;background:#e8d0a0"></div>
      <div class="abs" style="left:15px;top:6px;width:7px;height:8.500px;border-radius:50%;background:#e8c0a0"></div>
      <div class="abs" style="left:8px;top:13px;width:21px;height:20px;border-radius:8px 8px 0 0;background:#ece8e6"></div>
      <div class="abs" style="left:0;top:27px;width:38px;height:14px;background:#10296b"></div>
      <div class="abs" style="left:2px;top:29.500px;width:26px;font-size:1.800px;line-height:2.200px;color:#fff;text-align:center">Випускник кафедри державного управління</div>
    </div>
    <div class="abs" style="left:178.9px;top:48.5px;width:12.500px;height:12.500px;border-radius:50%;background:radial-gradient(circle,#fff 25%,#9fb4dc 50%,#e8eef8 70%);border:.5px solid #b8c4dc"></div>
    <div class="abs" style="left:61px;top:68.7px;width:38.200px;height:41px;border:.8px solid #10296b;border-radius:1.500px;background:#fff;overflow:hidden">
      <div class="abs" style="left:13.500px;top:3.500px;width:10px;height:11px;border-radius:50%;background:#c89a6a"></div>
      <div class="abs" style="left:15px;top:6px;width:7px;height:8.500px;border-radius:50%;background:#e8c0a0"></div>
      <div class="abs" style="left:8px;top:13px;width:21px;height:20px;border-radius:8px 8px 0 0;background:#e6e0d8"></div>
      <div class="abs" style="left:0;top:27px;width:38px;height:14px;background:#10296b"></div>
      <div class="abs" style="left:2px;top:29.500px;width:26px;font-size:1.800px;line-height:2.200px;color:#fff;text-align:center">Випускник кафедри державного управління</div>
    </div>
    <div class="abs" style="left:89.5px;top:99.2px;width:12.500px;height:12.500px;border-radius:50%;background:radial-gradient(circle,#fff 25%,#9fb4dc 50%,#e8eef8 70%);border:.5px solid #b8c4dc"></div>
    <div class="abs" style="left:106px;top:68.7px;width:38.200px;height:41px;border:.8px solid #10296b;border-radius:1.500px;background:#fff;overflow:hidden">
      <div class="abs" style="left:13.500px;top:3.500px;width:10px;height:11px;border-radius:50%;background:#4a2a1a"></div>
      <div class="abs" style="left:15px;top:6px;width:7px;height:8.500px;border-radius:50%;background:#e8c0a0"></div>
      <div class="abs" style="left:8px;top:13px;width:21px;height:20px;border-radius:8px 8px 0 0;background:#2a2a30"></div>
      <div class="abs" style="left:0;top:27px;width:38px;height:14px;background:#10296b"></div>
      <div class="abs" style="left:2px;top:29.500px;width:26px;font-size:1.800px;line-height:2.200px;color:#fff;text-align:center">Випускник кафедри державного управління</div>
    </div>
    <div class="abs" style="left:134.5px;top:99.2px;width:12.500px;height:12.500px;border-radius:50%;background:radial-gradient(circle,#fff 25%,#9fb4dc 50%,#e8eef8 70%);border:.5px solid #b8c4dc"></div>
  </div></div>
  <div class="abs thumb" style="top:800px">
    <div class="abs" style="left:0;top:7px;width:208px;text-align:center;font-size:11.500px;line-height:14px;color:#333;transform:translateX(-10.500px)">Про тренінги</div>
    <div class="abs t12" style="left:17.500px;top:0;width:176px">
      <div style="top:30.600px;width:172px;white-space:normal"><b>1-й Тренінг: назва:</b> Для майбутніх “Майстрів Міжфін» та проект «Вступ без стресу: правила та поради щодо вступу на спеціальність С1.01 “Економіка та міжнародні економічні відносини”.</div>
      <div style="top:41.700px"><b>Спікери:</b> к.е.н., доцент Тетяна Сергіївна Черкашина,</div>
      <div style="top:47.700px;padding-left:16px">к.е.н., доцент Ірина Володимирівна Пивавар</div>
      <div style="top:55px"><b>Спеціальність:</b> С1 «Економіка та міжнародні економічні відносини»</div>
      <div style="top:61px"><b>Школи/ліцеї № 1:</b></div>
      <div style="top:67.800px">•  11-ий клас Дергачівського ліцею № 3,</div>
      <div style="top:73.800px">•  11-ий клас Пісочинський ЗЗСО,</div>
      <div style="top:80.600px">•  Студенти ВК ХАДІФК.</div>
      <div style="top:87.100px"><b>Платформа:</b> виконується на віртуальному посиланні у ZOOM</div>
    </div>
  </div>
  <div class="abs thumb" style="top:942px">
    <div class="abs" style="left:0;top:7.500px;width:208px;text-align:center;font-size:11.500px;line-height:14px;color:#333;transform:translateX(-5.500px)">Про тренінги</div>
    <div class="abs t12" style="left:27.500px;top:0;width:150px">
      <div style="top:30.700px"><b>2-й Тренінг: назва:</b> «Світ державного устрою».</div>
      <div style="top:36.700px"><b>Спікер:</b> к.е.н., доцент Марина Володимирівна Груздь</div>
      <div style="top:43.500px"><b>Спеціальність:</b> D4 «Публічне управління та адміністрування»</div>
      <div style="top:49.500px"><b>Школи/ліцеї № 2:</b></div>
      <div style="top:57px">• 11-ий клас ХЗОШ 168,</div>
    </div>
  </div>
  <div class="abs" style="left:267.500px;top:184px;width:18.500px;height:817px;background:#d6d6d6"></div>
  <div class="abs" style="left:267.500px;top:185px;width:18.500px;height:18.500px;background:#fff;border:1px solid #cfcfcf"></div>
  <div class="abs" style="left:271.500px;top:192px;width:0;height:0;border-left:5px solid transparent;border-right:5px solid transparent;border-bottom:5px solid #777"></div>
  <div class="abs" style="left:267.500px;top:577px;width:18.500px;height:315.500px;background:#fff;border:1px solid #ababab"></div>
  <div class="abs" style="left:267.500px;top:981px;width:18.500px;height:18.500px;background:#fff;border:1px solid #cfcfcf"></div>
  <div class="abs" style="left:271.500px;top:988.500px;width:0;height:0;border-left:5px solid transparent;border-right:5px solid transparent;border-top:5px solid #777"></div>
 </div>
</div>
<div class="abs" style="left:290px;top:183px;width:1px;height:822px;background:#c3c3c3"></div>
<!-- ===== rulers ===== -->
<div class="abs" style="left:447px;top:188px;width:1332px;height:16.500px;background:#fff;overflow:hidden;font-size:12px;line-height:16.500px;color:#4a4a4a">
 <i class="abs" style="left:14px;top:5px;width:1px;height:6px;background:#555"></i>
 <i class="abs" style="left:5px;top:7px;width:1px;height:2px;background:#8a8a8a"></i>
 <i class="abs" style="left:24px;top:7px;width:1px;height:2px;background:#8a8a8a"></i>
 <span class="abs" style="left:34.6px;top:0;transform:translateX(-50%)">16</span>
 <i class="abs" style="left:54px;top:5px;width:1px;height:6px;background:#555"></i>
 <i class="abs" style="left:44px;top:7px;width:1px;height:2px;background:#8a8a8a"></i>
 <i class="abs" style="left:64px;top:7px;width:1px;height:2px;background:#8a8a8a"></i>
 <span class="abs" style="left:74.0px;top:0;transform:translateX(-50%)">15</span>
 <i class="abs" style="left:93px;top:5px;width:1px;height:6px;background:#555"></i>
 <i class="abs" style="left:83px;top:7px;width:1px;height:2px;background:#8a8a8a"></i>
 <i class="abs" style="left:103px;top:7px;width:1px;height:2px;background:#8a8a8a"></i>
 <span class="abs" style="left:113.4px;top:0;transform:translateX(-50%)">14</span>
 <i class="abs" style="left:133px;top:5px;width:1px;height:6px;background:#555"></i>
 <i class="abs" style="left:123px;top:7px;width:1px;height:2px;background:#8a8a8a"></i>
 <i class="abs" style="left:142px;top:7px;width:1px;height:2px;background:#8a8a8a"></i>
 <span class="abs" style="left:152.8px;top:0;transform:translateX(-50%)">13</span>
 <i class="abs" style="left:172px;top:5px;width:1px;height:6px;background:#555"></i>
 <i class="abs" style="left:162px;top:7px;width:1px;height:2px;background:#8a8a8a"></i>
 <i class="abs" style="left:182px;top:7px;width:1px;height:2px;background:#8a8a8a"></i>
 <span class="abs" style="left:192.2px;top:0;transform:translateX(-50%)">12</span>
 <i class="abs" style="left:211px;top:5px;width:1px;height:6px;background:#555"></i>
 <i class="abs" style="left:202px;top:7px;width:1px;height:2px;background:#8a8a8a"></i>
 <i class="abs" style="left:221px;top:7px;width:1px;height:2px;background:#8a8a8a"></i>
 <span class="abs" style="left:231.6px;top:0;transform:translateX(-50%)">11</span>
 <i class="abs" style="left:251px;top:5px;width:1px;height:6px;background:#555"></i>
 <i class="abs" style="left:241px;top:7px;width:1px;height:2px;background:#8a8a8a"></i>
 <i class="abs" style="left:261px;top:7px;width:1px;height:2px;background:#8a8a8a"></i>
 <span class="abs" style="left:271.0px;top:0;transform:translateX(-50%)">10</span>
 <i class="abs" style="left:290px;top:5px;width:1px;height:6px;background:#555"></i>
 <i class="abs" style="left:280px;top:7px;width:1px;height:2px;background:#8a8a8a"></i>
 <i class="abs" style="left:300px;top:7px;width:1px;height:2px;background:#8a8a8a"></i>
 <span class="abs" style="left:310.4px;top:0;transform:translateX(-50%)">9</span>
 <i class="abs" style="left:330px;top:5px;width:1px;height:6px;background:#555"></i>
 <i class="abs" style="left:320px;top:7px;width:1px;height:2px;background:#8a8a8a"></i>
 <i class="abs" style="left:339px;top:7px;width:1px;height:2px;background:#8a8a8a"></i>
 <span class="abs" style="left:349.8px;top:0;transform:translateX(-50%)">8</span>
 <i class="abs" style="left:369px;top:5px;width:1px;height:6px;background:#555"></i>
 <i class="abs" style="left:359px;top:7px;width:1px;height:2px;background:#8a8a8a"></i>
 <i class="abs" style="left:379px;top:7px;width:1px;height:2px;background:#8a8a8a"></i>
 <span class="abs" style="left:389.2px;top:0;transform:translateX(-50%)">7</span>
 <i class="abs" style="left:408px;top:5px;width:1px;height:6px;background:#555"></i>
 <i class="abs" style="left:399px;top:7px;width:1px;height:2px;background:#8a8a8a"></i>
 <i class="abs" style="left:418px;top:7px;width:1px;height:2px;background:#8a8a8a"></i>
 <span class="abs" style="left:428.6px;top:0;transform:translateX(-50%)">6</span>
 <i class="abs" style="left:448px;top:5px;width:1px;height:6px;background:#555"></i>
 <i class="abs" style="left:438px;top:7px;width:1px;height:2px;background:#8a8a8a"></i>
 <i class="abs" style="left:458px;top:7px;width:1px;height:2px;background:#8a8a8a"></i>
 <span class="abs" style="left:468.0px;top:0;transform:translateX(-50%)">5</span>
 <i class="abs" style="left:487px;top:5px;width:1px;height:6px;background:#555"></i>
 <i class="abs" style="left:477px;top:7px;width:1px;height:2px;background:#8a8a8a"></i>
 <i class="abs" style="left:497px;top:7px;width:1px;height:2px;background:#8a8a8a"></i>
 <span class="abs" style="left:507.4px;top:0;transform:translateX(-50%)">4</span>
 <i class="abs" style="left:527px;top:5px;width:1px;height:6px;background:#555"></i>
 <i class="abs" style="left:517px;top:7px;width:1px;height:2px;background:#8a8a8a"></i>
 <i class="abs" style="left:536px;top:7px;width:1px;height:2px;background:#8a8a8a"></i>
 <span class="abs" style="left:546.8px;top:0;transform:translateX(-50%)">3</span>
 <i class="abs" style="left:566px;top:5px;width:1px;height:6px;background:#555"></i>
 <i class="abs" style="left:556px;top:7px;width:1px;height:2px;background:#8a8a8a"></i>
 <i class="abs" style="left:576px;top:7px;width:1px;height:2px;background:#8a8a8a"></i>
 <span class="abs" style="left:586.2px;top:0;transform:translateX(-50%)">2</span>
 <i class="abs" style="left:605px;top:5px;width:1px;height:6px;background:#555"></i>
 <i class="abs" style="left:596px;top:7px;width:1px;height:2px;background:#8a8a8a"></i>
 <i class="abs" style="left:615px;top:7px;width:1px;height:2px;background:#8a8a8a"></i>
 <span class="abs" style="left:625.6px;top:0;transform:translateX(-50%)">1</span>
 <i class="abs" style="left:645px;top:5px;width:1px;height:6px;background:#555"></i>
 <i class="abs" style="left:635px;top:7px;width:1px;height:2px;background:#8a8a8a"></i>
 <i class="abs" style="left:655px;top:7px;width:1px;height:2px;background:#8a8a8a"></i>
 <span class="abs" style="left:665.0px;top:0;transform:translateX(-50%)">0</span>
 <i class="abs" style="left:684px;top:5px;width:1px;height:6px;background:#555"></i>
 <i class="abs" style="left:674px;top:7px;width:1px;height:2px;background:#8a8a8a"></i>
 <i class="abs" style="left:694px;top:7px;width:1px;height:2px;background:#8a8a8a"></i>
 <span class="abs" style="left:704.4px;top:0;transform:translateX(-50%)">1</span>
 <i class="abs" style="left:724px;top:5px;width:1px;height:6px;background:#555"></i>
 <i class="abs" style="left:714px;top:7px;width:1px;height:2px;background:#8a8a8a"></i>
 <i class="abs" style="left:733px;top:7px;width:1px;height:2px;background:#8a8a8a"></i>
 <span class="abs" style="left:743.8px;top:0;transform:translateX(-50%)">2</span>
 <i class="abs" style="left:763px;top:5px;width:1px;height:6px;background:#555"></i>
 <i class="abs" style="left:753px;top:7px;width:1px;height:2px;background:#8a8a8a"></i>
 <i class="abs" style="left:773px;top:7px;width:1px;height:2px;background:#8a8a8a"></i>
 <span class="abs" style="left:783.2px;top:0;transform:translateX(-50%)">3</span>
 <i class="abs" style="left:802px;top:5px;width:1px;height:6px;background:#555"></i>
 <i class="abs" style="left:793px;top:7px;width:1px;height:2px;background:#8a8a8a"></i>
 <i class="abs" style="left:812px;top:7px;width:1px;height:2px;background:#8a8a8a"></i>
 <span class="abs" style="left:822.6px;top:0;transform:translateX(-50%)">4</span>
 <i class="abs" style="left:842px;top:5px;width:1px;height:6px;background:#555"></i>
 <i class="abs" style="left:832px;top:7px;width:1px;height:2px;background:#8a8a8a"></i>
 <i class="abs" style="left:852px;top:7px;width:1px;height:2px;background:#8a8a8a"></i>
 <span class="abs" style="left:862.0px;top:0;transform:translateX(-50%)">5</span>
 <i class="abs" style="left:881px;top:5px;width:1px;height:6px;background:#555"></i>
 <i class="abs" style="left:871px;top:7px;width:1px;height:2px;background:#8a8a8a"></i>
 <i class="abs" style="left:891px;top:7px;width:1px;height:2px;background:#8a8a8a"></i>
 <span class="abs" style="left:901.4px;top:0;transform:translateX(-50%)">6</span>
 <i class="abs" style="left:921px;top:5px;width:1px;height:6px;background:#555"></i>
 <i class="abs" style="left:911px;top:7px;width:1px;height:2px;background:#8a8a8a"></i>
 <i class="abs" style="left:930px;top:7px;width:1px;height:2px;background:#8a8a8a"></i>
 <span class="abs" style="left:940.8px;top:0;transform:translateX(-50%)">7</span>
 <i class="abs" style="left:960px;top:5px;width:1px;height:6px;background:#555"></i>
 <i class="abs" style="left:950px;top:7px;width:1px;height:2px;background:#8a8a8a"></i>
 <i class="abs" style="left:970px;top:7px;width:1px;height:2px;background:#8a8a8a"></i>
 <span class="abs" style="left:980.2px;top:0;transform:translateX(-50%)">8</span>
 <i class="abs" style="left:999px;top:5px;width:1px;height:6px;background:#555"></i>
 <i class="abs" style="left:990px;top:7px;width:1px;height:2px;background:#8a8a8a"></i>
 <i class="abs" style="left:1009px;top:7px;width:1px;height:2px;background:#8a8a8a"></i>
 <span class="abs" style="left:1019.6px;top:0;transform:translateX(-50%)">9</span>
 <i class="abs" style="left:1039px;top:5px;width:1px;height:6px;background:#555"></i>
 <i class="abs" style="left:1029px;top:7px;width:1px;height:2px;background:#8a8a8a"></i>
 <i class="abs" style="left:1049px;top:7px;width:1px;height:2px;background:#8a8a8a"></i>
 <span class="abs" style="left:1059.0px;top:0;transform:translateX(-50%)">10</span>
 <i class="abs" style="left:1078px;top:5px;width:1px;height:6px;background:#555"></i>
 <i class="abs" style="left:1068px;top:7px;width:1px;height:2px;background:#8a8a8a"></i>
 <i class="abs" style="left:1088px;top:7px;width:1px;height:2px;background:#8a8a8a"></i>
 <span class="abs" style="left:1098.4px;top:0;transform:translateX(-50%)">11</span>
 <i class="abs" style="left:1118px;top:5px;width:1px;height:6px;background:#555"></i>
 <i class="abs" style="left:1108px;top:7px;width:1px;height:2px;background:#8a8a8a"></i>
 <i class="abs" style="left:1127px;top:7px;width:1px;height:2px;background:#8a8a8a"></i>
 <span class="abs" style="left:1137.8px;top:0;transform:translateX(-50%)">12</span>
 <i class="abs" style="left:1157px;top:5px;width:1px;height:6px;background:#555"></i>
 <i class="abs" style="left:1147px;top:7px;width:1px;height:2px;background:#8a8a8a"></i>
 <i class="abs" style="left:1167px;top:7px;width:1px;height:2px;background:#8a8a8a"></i>
 <span class="abs" style="left:1177.2px;top:0;transform:translateX(-50%)">13</span>
 <i class="abs" style="left:1196px;top:5px;width:1px;height:6px;background:#555"></i>
 <i class="abs" style="left:1187px;top:7px;width:1px;height:2px;background:#8a8a8a"></i>
 <i class="abs" style="left:1206px;top:7px;width:1px;height:2px;background:#8a8a8a"></i>
 <span class="abs" style="left:1216.6px;top:0;transform:translateX(-50%)">14</span>
 <i class="abs" style="left:1236px;top:5px;width:1px;height:6px;background:#555"></i>
 <i class="abs" style="left:1226px;top:7px;width:1px;height:2px;background:#8a8a8a"></i>
 <i class="abs" style="left:1246px;top:7px;width:1px;height:2px;background:#8a8a8a"></i>
 <span class="abs" style="left:1256.0px;top:0;transform:translateX(-50%)">15</span>
 <i class="abs" style="left:1275px;top:5px;width:1px;height:6px;background:#555"></i>
 <i class="abs" style="left:1265px;top:7px;width:1px;height:2px;background:#8a8a8a"></i>
 <i class="abs" style="left:1285px;top:7px;width:1px;height:2px;background:#8a8a8a"></i>
 <span class="abs" style="left:1295.4px;top:0;transform:translateX(-50%)">16</span>
 <i class="abs" style="left:1315px;top:5px;width:1px;height:6px;background:#555"></i>
 <i class="abs" style="left:1305px;top:7px;width:1px;height:2px;background:#8a8a8a"></i>
 <i class="abs" style="left:1324px;top:7px;width:1px;height:2px;background:#8a8a8a"></i>
 <i class="abs" style="left:1354px;top:5px;width:1px;height:6px;background:#555"></i>
 <i class="abs" style="left:1344px;top:7px;width:1px;height:2px;background:#8a8a8a"></i>
 <i class="abs" style="left:1364px;top:7px;width:1px;height:2px;background:#8a8a8a"></i>
</div>
<div class="abs" style="left:298px;top:231.500px;width:17.500px;height:748.500px;background:#fff;overflow:hidden;font-size:12px;line-height:17.500px;color:#4a4a4a">
 <i class="abs" style="left:5px;top:0px;width:6px;height:1px;background:#555"></i>
 <i class="abs" style="left:7px;top:-10px;width:2px;height:1px;background:#8a8a8a"></i>
 <i class="abs" style="left:7px;top:10px;width:2px;height:1px;background:#8a8a8a"></i>
 <span class="abs" style="left:8.500px;top:20.4px;transform:translate(-50%,-50%) rotate(-90deg);white-space:nowrap">9</span>
 <i class="abs" style="left:5px;top:40px;width:6px;height:1px;background:#555"></i>
 <i class="abs" style="left:7px;top:30px;width:2px;height:1px;background:#8a8a8a"></i>
 <i class="abs" style="left:7px;top:49px;width:2px;height:1px;background:#8a8a8a"></i>
 <span class="abs" style="left:8.500px;top:59.8px;transform:translate(-50%,-50%) rotate(-90deg);white-space:nowrap">8</span>
 <i class="abs" style="left:5px;top:79px;width:6px;height:1px;background:#555"></i>
 <i class="abs" style="left:7px;top:69px;width:2px;height:1px;background:#8a8a8a"></i>
 <i class="abs" style="left:7px;top:89px;width:2px;height:1px;background:#8a8a8a"></i>
 <span class="abs" style="left:8.500px;top:99.2px;transform:translate(-50%,-50%) rotate(-90deg);white-space:nowrap">7</span>
 <i class="abs" style="left:5px;top:118px;width:6px;height:1px;background:#555"></i>
 <i class="abs" style="left:7px;top:109px;width:2px;height:1px;background:#8a8a8a"></i>
 <i class="abs" style="left:7px;top:128px;width:2px;height:1px;background:#8a8a8a"></i>
 <span class="abs" style="left:8.500px;top:138.6px;transform:translate(-50%,-50%) rotate(-90deg);white-space:nowrap">6</span>
 <i class="abs" style="left:5px;top:158px;width:6px;height:1px;background:#555"></i>
 <i class="abs" style="left:7px;top:148px;width:2px;height:1px;background:#8a8a8a"></i>
 <i class="abs" style="left:7px;top:168px;width:2px;height:1px;background:#8a8a8a"></i>
 <span class="abs" style="left:8.500px;top:178.0px;transform:translate(-50%,-50%) rotate(-90deg);white-space:nowrap">5</span>
 <i class="abs" style="left:5px;top:197px;width:6px;height:1px;background:#555"></i>
 <i class="abs" style="left:7px;top:187px;width:2px;height:1px;background:#8a8a8a"></i>
 <i class="abs" style="left:7px;top:207px;width:2px;height:1px;background:#8a8a8a"></i>
 <span class="abs" style="left:8.500px;top:217.4px;transform:translate(-50%,-50%) rotate(-90deg);white-space:nowrap">4</span>
 <i class="abs" style="left:5px;top:237px;width:6px;height:1px;background:#555"></i>
 <i class="abs" style="left:7px;top:227px;width:2px;height:1px;background:#8a8a8a"></i>
 <i class="abs" style="left:7px;top:246px;width:2px;height:1px;background:#8a8a8a"></i>
 <span class="abs" style="left:8.500px;top:256.8px;transform:translate(-50%,-50%) rotate(-90deg);white-space:nowrap">3</span>
 <i class="abs" style="left:5px;top:276px;width:6px;height:1px;background:#555"></i>
 <i class="abs" style="left:7px;top:266px;width:2px;height:1px;background:#8a8a8a"></i>
 <i class="abs" style="left:7px;top:286px;width:2px;height:1px;background:#8a8a8a"></i>
 <span class="abs" style="left:8.500px;top:296.2px;transform:translate(-50%,-50%) rotate(-90deg);white-space:nowrap">2</span>
 <i class="abs" style="left:5px;top:315px;width:6px;height:1px;background:#555"></i>
 <i class="abs" style="left:7px;top:306px;width:2px;height:1px;background:#8a8a8a"></i>
 <i class="abs" style="left:7px;top:325px;width:2px;height:1px;background:#8a8a8a"></i>
 <span class="abs" style="left:8.500px;top:335.6px;transform:translate(-50%,-50%) rotate(-90deg);white-space:nowrap">1</span>
 <i class="abs" style="left:5px;top:355px;width:6px;height:1px;background:#555"></i>
 <i class="abs" style="left:7px;top:345px;width:2px;height:1px;background:#8a8a8a"></i>
 <i class="abs" style="left:7px;top:365px;width:2px;height:1px;background:#8a8a8a"></i>
 <span class="abs" style="left:8.500px;top:375.0px;transform:translate(-50%,-50%) rotate(-90deg);white-space:nowrap">0</span>
 <i class="abs" style="left:5px;top:394px;width:6px;height:1px;background:#555"></i>
 <i class="abs" style="left:7px;top:384px;width:2px;height:1px;background:#8a8a8a"></i>
 <i class="abs" style="left:7px;top:404px;width:2px;height:1px;background:#8a8a8a"></i>
 <span class="abs" style="left:8.500px;top:414.4px;transform:translate(-50%,-50%) rotate(-90deg);white-space:nowrap">1</span>
 <i class="abs" style="left:5px;top:434px;width:6px;height:1px;background:#555"></i>
 <i class="abs" style="left:7px;top:424px;width:2px;height:1px;background:#8a8a8a"></i>
 <i class="abs" style="left:7px;top:443px;width:2px;height:1px;background:#8a8a8a"></i>
 <span class="abs" style="left:8.500px;top:453.8px;transform:translate(-50%,-50%) rotate(-90deg);white-space:nowrap">2</span>
 <i class="abs" style="left:5px;top:473px;width:6px;height:1px;background:#555"></i>
 <i class="abs" style="left:7px;top:463px;width:2px;height:1px;background:#8a8a8a"></i>
 <i class="abs" style="left:7px;top:483px;width:2px;height:1px;background:#8a8a8a"></i>
 <span class="abs" style="left:8.500px;top:493.2px;transform:translate(-50%,-50%) rotate(-90deg);white-space:nowrap">3</span>
 <i class="abs" style="left:5px;top:512px;width:6px;height:1px;background:#555"></i>
 <i class="abs" style="left:7px;top:503px;width:2px;height:1px;background:#8a8a8a"></i>
 <i class="abs" style="left:7px;top:522px;width:2px;height:1px;background:#8a8a8a"></i>
 <span class="abs" style="left:8.500px;top:532.6px;transform:translate(-50%,-50%) rotate(-90deg);white-space:nowrap">4</span>
 <i class="abs" style="left:5px;top:552px;width:6px;height:1px;background:#555"></i>
 <i class="abs" style="left:7px;top:542px;width:2px;height:1px;background:#8a8a8a"></i>
 <i class="abs" style="left:7px;top:562px;width:2px;height:1px;background:#8a8a8a"></i>
 <span class="abs" style="left:8.500px;top:572.0px;transform:translate(-50%,-50%) rotate(-90deg);white-space:nowrap">5</span>
 <i class="abs" style="left:5px;top:591px;width:6px;height:1px;background:#555"></i>
 <i class="abs" style="left:7px;top:581px;width:2px;height:1px;background:#8a8a8a"></i>
 <i class="abs" style="left:7px;top:601px;width:2px;height:1px;background:#8a8a8a"></i>
 <span class="abs" style="left:8.500px;top:611.4px;transform:translate(-50%,-50%) rotate(-90deg);white-space:nowrap">6</span>
 <i class="abs" style="left:5px;top:631px;width:6px;height:1px;background:#555"></i>
 <i class="abs" style="left:7px;top:621px;width:2px;height:1px;background:#8a8a8a"></i>
 <i class="abs" style="left:7px;top:640px;width:2px;height:1px;background:#8a8a8a"></i>
 <span class="abs" style="left:8.500px;top:650.8px;transform:translate(-50%,-50%) rotate(-90deg);white-space:nowrap">7</span>
 <i class="abs" style="left:5px;top:670px;width:6px;height:1px;background:#555"></i>
 <i class="abs" style="left:7px;top:660px;width:2px;height:1px;background:#8a8a8a"></i>
 <i class="abs" style="left:7px;top:680px;width:2px;height:1px;background:#8a8a8a"></i>
 <span class="abs" style="left:8.500px;top:690.2px;transform:translate(-50%,-50%) rotate(-90deg);white-space:nowrap">8</span>
 <i class="abs" style="left:5px;top:709px;width:6px;height:1px;background:#555"></i>
 <i class="abs" style="left:7px;top:700px;width:2px;height:1px;background:#8a8a8a"></i>
 <i class="abs" style="left:7px;top:719px;width:2px;height:1px;background:#8a8a8a"></i>
 <span class="abs" style="left:8.500px;top:729.6px;transform:translate(-50%,-50%) rotate(-90deg);white-space:nowrap">9</span>
 <i class="abs" style="left:5px;top:749px;width:6px;height:1px;background:#555"></i>
 <i class="abs" style="left:7px;top:739px;width:2px;height:1px;background:#8a8a8a"></i>
 <i class="abs" style="left:7px;top:759px;width:2px;height:1px;background:#8a8a8a"></i>
</div>

<div id="slide" class="abs"><div class="abs" style="left:1px;top:1px;width:0;height:0">
  <div class="sl" style="top:189px"><b>Тверді навичкі (Hard skills)</b>:</div>
  <div class="sl" style="top:225px">Технічні та професійні навички</div>
  <div class="sl" style="top:261px">через навчання та досвід і є</div>
  <div class="sl" style="top:297px">необхідними для виконання</div>
  <div class="sl" style="top:333px">певної роботи:</div>
  <div class="sl" style="top:369px;padding-left:9px">D4 «Публічне управління та</div>
  <div class="sl" style="top:405px">адміністрування» та</div>
  <div class="sl" style="top:441px;padding-left:9px">С1 «Економіка та міжнародні</div>
  <div class="sl" style="top:477px">економічні відносини»</div>
  <svg class="abs" style="left:628px;top:170px" width="614" height="465" viewBox="0 0 614 465" font-family="Liberation Sans, sans-serif">
   <g id="infog">
    <rect x="0" y="0.500" width="306" height="464.500" fill="#0b3551"/>
    <rect x="306" y="0.500" width="308" height="464.500" fill="#80beb1"/>
    <!-- laptop icon -->
    <g fill="none" stroke="#fff" stroke-width="5" stroke-linejoin="round">
      <rect x="116" y="18.300" width="51" height="31"/>
      <path d="M115 50.500h53l7 11a2 2 0 0 1-1.500 2.500h-64a2 2 0 0 1-1.500-2.500z"/>
    </g>
    <!-- handshake icon -->
    <g fill="none" stroke="#fff" stroke-width="4.600" stroke-linejoin="round" stroke-linecap="round">
      <path d="M425.500 26.500l21.500-7.500 12 5 12-5.500 22.500 7.500v20l-17 8-12 15.500-9.500-1.500-22-22-7.500-4z"/>
      <path d="M459 24l-18 15 5.500 5 12-7 18 17.500"/>
      <path d="M456 62l3 3M462 58.500l3 3M467.500 55l2.500 2.500"/>
    </g>
    <!-- titles -->
    <text x="31" y="108" font-size="39" fill="#7fc2b2" stroke="#7fc2b2" stroke-width=".700" textLength="224.500" lengthAdjust="spacingAndGlyphs">Hard Skills</text>
    <text x="359" y="108" font-size="39" fill="#0b3551" stroke="#0b3551" stroke-width=".700" textLength="216.500" lengthAdjust="spacingAndGlyphs">Soft Skills</text>
    <circle cx="307.800" cy="94.700" r="28.300" fill="#fdfdfb"/>
    <text x="282.500" y="108" font-size="40" font-weight="bold" fill="#7fc2b2" textLength="26" lengthAdjust="spacingAndGlyphs">v</text>
    <text x="308.500" y="108" font-size="40" font-weight="bold" fill="#0b3551" textLength="20.500" lengthAdjust="spacingAndGlyphs">s</text>
    <!-- hard list -->
    <g font-size="12" font-weight="bold" fill="#f2f6f7" lengthAdjust="spacingAndGlyphs">
      <g fill="#f2f6f7"><circle cx="38" cy="133" r="2.100"/><circle cx="38" cy="153.300" r="2.100"/><circle cx="38" cy="173.500" r="2.100"/><circle cx="38" cy="193.800" r="2.100"/><circle cx="38" cy="214.300" r="2.100"/><circle cx="38" cy="234.500" r="2.100"/><circle cx="38" cy="254.800" r="2.100"/><circle cx="38" cy="275" r="2.100"/></g>
      <text x="48" y="137.300" textLength="151.500" lengthAdjust="spacingAndGlyphs">A degree or certificate</text>
      <text x="48" y="157.600" textLength="83.500" lengthAdjust="spacingAndGlyphs">Typing speed</text>
      <text x="48" y="177.700" textLength="121.500" lengthAdjust="spacingAndGlyphs">Machine operation</text>
      <text x="48" y="198.100" textLength="156" lengthAdjust="spacingAndGlyphs">Computer programming</text>
      <text x="48" y="218.600" textLength="214.500" lengthAdjust="spacingAndGlyphs">Proficiency in a foreign language</text>
      <text x="48" y="238.600" textLength="123.500" lengthAdjust="spacingAndGlyphs">Affiliate marketing</text>
      <text x="48" y="259.100" textLength="113.500" lengthAdjust="spacingAndGlyphs">Inventory control</text>
      <text x="48" y="279.100" textLength="112.500" lengthAdjust="spacingAndGlyphs">Business analysis</text>
    </g>
    <!-- soft list -->
    <g font-size="11.500" font-weight="bold" fill="#f1f9f6">
      <g><circle cx="347.500" cy="130.700" r="1.900"/><circle cx="347.500" cy="145.800" r="1.900"/><circle cx="347.500" cy="160.900" r="1.900"/><circle cx="347.500" cy="176" r="1.900"/><circle cx="347.500" cy="191.100" r="1.900"/><circle cx="347.500" cy="206.200" r="1.900"/><circle cx="347.500" cy="221.300" r="1.900"/><circle cx="347.500" cy="236.400" r="1.900"/><circle cx="347.500" cy="251.500" r="1.900"/><circle cx="347.500" cy="266.600" r="1.900"/><circle cx="347.500" cy="281.700" r="1.900"/></g>
      <text x="358" y="134.700" textLength="116.500" lengthAdjust="spacingAndGlyphs">Time management</text>
      <text x="358" y="149.800" textLength="80.500" lengthAdjust="spacingAndGlyphs">Multitasking</text>
      <text x="358" y="164.900" textLength="122.300" lengthAdjust="spacingAndGlyphs">Attention to detail</text>
      <text x="358" y="180" textLength="89.200" lengthAdjust="spacingAndGlyphs">Responsibility</text>
      <text x="358" y="195.100" textLength="119" lengthAdjust="spacingAndGlyphs">Strategic thinking</text>
      <text x="358" y="210.200" textLength="102" lengthAdjust="spacingAndGlyphs">Problem-solving</text>
      <text x="358" y="225.300" textLength="138.400" lengthAdjust="spacingAndGlyphs">Good decision making</text>
      <text x="358" y="240.400" textLength="122" lengthAdjust="spacingAndGlyphs">Conflict resolution</text>
      <text x="358" y="255.500" textLength="67.300" lengthAdjust="spacingAndGlyphs">Innovation</text>
      <text x="358" y="270.600" textLength="73" lengthAdjust="spacingAndGlyphs">Social skills</text>
      <text x="358" y="285.700" textLength="141.400" lengthAdjust="spacingAndGlyphs">Emotional intelligence</text>
    </g>
    <!-- left woman -->
    <g>
      <path d="M71 314c-10 0-18 4-21.500 11-5 9-8 20-9.500 32-1.500 10-3.500 18-5.500 25l14 8 50 6 14-4c-3-8-7-17-8.500-27-1.500-12-3.500-24-9.500-37-4-9-12-14-23.500-14z" fill="#f5fbfa"/>
      <path d="M58.500 337c0-9 6-15 14.500-15s15 6 16 15c1 10 1 20-2 28-3 9-8 16-14 18-6-2-11-8-13-18-1.500-8-1.500-18-1.500-28z" fill="#fff" stroke="#12364f" stroke-width="1.100"/>
      <path d="M66 374l-1.500 9 8 5 8-4.500-1-9.500z" fill="#fff"/>
      <circle cx="65" cy="341.700" r="8.400" fill="none" stroke="#12364f" stroke-width="1.300"/>
      <circle cx="82" cy="341.700" r="8" fill="none" stroke="#12364f" stroke-width="1.300"/>
      <path d="M73.400 341h.7" stroke="#12364f" stroke-width="1.300"/>
      <circle cx="70" cy="342" r="1.100" fill="#12364f"/><circle cx="81.500" cy="342" r="1.100" fill="#12364f"/>
      <path d="M65.500 359c5 2.500 11 2.500 16-1-1 8-5 12.500-9 12.500s-6.500-5-7-11.500z" fill="#0b3551"/>
      <path d="M74 354.500c.8-.8 2-.8 2.500 0s0 2.500-1.200 2.500-1.800-1.500-1.300-2.500z" fill="none" stroke="#12364f" stroke-width=".9"/>
      <!-- jacket -->
      <path d="M39 376c8-2.500 16-2 22-1l12 60 8-60c7-1 13-1 19 1 5 4 8 12 11 22l12 30 20-52 10 4.500-18 66c-2 5-8 6-13 3l-16-14 3 29.500H33.500l2-19-16 4c-5 1-9-3-7.500-8z" fill="#7fc0b0"/>
      <path d="M60.500 375c4.500 9 16.500 9 21 0l5 90H70z" fill="#fff"/>
      <path d="M60.500 375L50 391l8 6-8.500 9L63 423M81.500 375l10 13-7.500 7 8 7-9.500 17" fill="none" stroke="#12364f" stroke-width="1"/>
      <path d="M36 425l-1 20 32 7M100 395l3 30 13 17" fill="none" stroke="#12364f" stroke-width=".9"/>
      <!-- hands -->
      <path d="M84 429c-4 2-10 5-14 8-3 2-3 6-1 8 6 4 14 6 22 6 3-1 4-3 3-5l2-3-2-3 1-4c-4-1-8-1-11-2z" fill="#fff" stroke="#12364f" stroke-width=".9"/>
      <path d="M143 377l-3-8c-1-4 0-8 2-11l2 6 5-9 2 1 4-4 2 1.500 3.500-2 1.500 2 2 .5c-1 6-4 12-9 17l-3 9z" fill="#fff" stroke="#12364f" stroke-width=".9"/>
    </g>
    <!-- cap, book, briefcase -->
    <g fill="none" stroke="#a9d9cd" stroke-width="3.300" stroke-linejoin="round" stroke-linecap="round">
      <path d="M173 335l27-14 27 14-27 9z" />
      <path d="M184 341v10c0 3.500 7 6 16 6s16-2.500 16-6v-10"/>
      <path d="M184 350c4 2.500 9 3.500 16 3.500s12-1 16-3.500"/>
      <path d="M175.500 337v17"/>
    </g>
    <circle cx="175.500" cy="356" r="3" fill="#a9d9cd"/>
    <path d="M247 335l24-11v3l-20 9.500 26-4.500v27.500l-24 7.500-6-4.500z" fill="#a9d9cd"/>
    <path d="M208 381v-4.500c0-1.500 1-2.500 2.500-2.500h21c1.500 0 2.500 1 2.500 2.500V381" fill="none" stroke="#a9d9cd" stroke-width="2.800"/>
    <rect x="196" y="380.500" width="51.500" height="34.500" fill="#a9d9cd"/>
    <path d="M196 401h51.500" stroke="#0b3551" stroke-width="1.600"/>
    <rect x="218.500" y="396.500" width="6" height="10" fill="#a9d9cd" stroke="#0b3551" stroke-width="1.400"/>
    <!-- people icon -->
    <g fill="#12364f">
      <path d="M397 322.500c7 0 11 5 11 11.500 0 4-1.500 7.500-4 9.500 7 2 12 6 12 13.500h-22z"/>
      <path d="M388 322c7.500 0 12 5 12 12 0 4-1.500 7.500-4 9.500 7 2 10.500 6 10.500 13.500h-33.500c0-7.500 4-11.500 11-13.500-2.500-2-4-5.500-4-9.500 0-7 4-12 8-12z" stroke="#80beb1" stroke-width="1.300"/>
    </g>
    <!-- lightbulb -->
    <g fill="none" stroke="#12364f" stroke-width="1.700" stroke-linecap="round">
      <path d="M346.500 408c0-5-8.500-9-8.500-19.500a15 15 0 0 1 30 0c0 10.500-8 14.500-8 19.500z"/>
      <path d="M347 411.500h12.500M347.500 414.500h11.500M349 417.500h8.500"/>
      <path d="M347.500 390l4 4 8-8"/>
      <path d="M353.500 361v5M333 367l3 3.500M373 367l-3 3.500M327 387h4.500M375.500 385.500h4.500"/>
    </g>
    <!-- heart in hand -->
    <path d="M430 393.500l-10-9.500c-3.500-3.500-3.500-8 0-10.500 3.200-2.300 7.500-1.500 10 2 2.500-3.500 6.800-4.300 10-2 3.500 2.500 3.500 7 0 10.500z" fill="#12364f"/>
    <path d="M404 403.500h9l7-3.500h15c2.500 0 2.500 4 0 4.500l-9 1.500v2l12-1 13-7c2.500-1 4.500 2 2.500 4l-16 11.500h-33.500z" fill="#12364f"/>
    <!-- right woman -->
    <g>
      <path d="M557 314c-9 0-15 4-17 11-2 8-1 14-4 20-4 7-12 11-18 17-7 6-11 12-8 19 3 6 10 8 18 6l52-16c5-5 7-12 5.500-20-1-9-3-19-8.500-27-4-6-11-10-20-10z" fill="#f5fbfa" stroke="#12364f" stroke-width=".8"/>
      <path d="M541 331c2-6 8-9 14-8.500 4 .5 6 3 7 7l3 9c2-1 4 0 4 2.500s-2 5-4.500 5l-2 9c-2 4-6 6-10 6-5 0-9-3-10.500-8-1.500-6-2.500-15-1-22z" fill="#fff" stroke="#12364f" stroke-width="1"/>
      <path d="M546 346c3 1.500 6 1 8.500-1.500 0 4-1.500 7.500-4 8-2.500.3-4-3-4.500-6.500z" fill="#0b3551"/>
      <circle cx="545.500" cy="338.500" r="1" fill="#12364f"/><circle cx="553.500" cy="336.500" r="1" fill="#12364f"/>
      <path d="M547.500 361l17.500-3 1 10-9 6-8-4z" fill="#fff"/>
      <path d="M546 366c6 4 13 3 19.500-1.500l2 60H541z" fill="#0b3551"/>
      <path d="M538.500 440h22v17h22.500v8.500h-66.500V457h22z" fill="#0b3551"/>
      <!-- jacket -->
      <path d="M566 364c8 1 16 3 20 8 8 10 13 26 15.500 41 1 9 0 20-2 28l-16 5-1 11h-23l7-35 1-55z" fill="#a9d9cd"/>
      <path d="M546 365c-7 3-14 8-18 14l-5 9-38-16-8.500-1-9.500 6c8 16 18 30 30 42 8 5 16 6 24 4l-5 30h22l8-30z" fill="#a9d9cd"/>
      <path d="M528 380l-5 45M583 372l3 66M570 425l29-5" fill="none" stroke="#5f9f92" stroke-width=".8"/>
      <!-- raised hand -->
      <path d="M468 379l-12-14c-3-4-4-8-3-12l6 4 1-6 5 2 3 6 1-6c3 3 5 8 6 13l2.500 11z" fill="#fff" stroke="#12364f" stroke-width=".9"/>
      <!-- laptop -->
      <path d="M499.500 400h46.500l8 28.600h-46.500z" fill="#fff" stroke="#8fb0a8" stroke-width="1"/>
      <path d="M505.500 429.500l63 1.800" stroke="#8fa8a8" stroke-width="1.600"/>
      <path d="M521 426c4-2 10-2.500 15-1l13 4v6c-4 3.500-10 4.500-16 3-5-1.500-10-5-12-12z" fill="#fff" stroke="#12364f" stroke-width=".8"/>
    </g>
   </g>
  </svg>
</div></div>

<!-- ===== Zoom floating toolbar ===== -->
<div id="zoombar" class="abs">
 <div class="abs" style="left:0;top:12px;width:0;height:0">
  <!-- mic -->
  <svg class="abs" style="left:43px;top:14px" width="28" height="34" viewBox="0 0 28 34"><g class="zi"><rect x="9.500" y="2" width="9" height="17.500" rx="4.500"/><path d="M5 14.500a9 9 0 0 0 18 0M14 24v7M9 31h10"/></g></svg>
  <svg class="abs" style="left:88px;top:28px" width="11" height="7" viewBox="0 0 11 7"><path class="zi" d="M1.200 1.200l4.300 4.300 4.300-4.300"/></svg>
  <div class="abs zl" style="left:57.500px">Звук</div>
  <!-- video -->
  <svg class="abs" style="left:147px;top:21px" width="33" height="21" viewBox="0 0 33 21"><g class="zi"><rect x="1.500" y="2" width="19" height="16.500" rx="4"/><path d="M23.500 8.500l7-4.500v12.500l-7-4.500z"/></g></svg>
  <svg class="abs" style="left:192.500px;top:28px" width="11" height="7" viewBox="0 0 11 7"><path class="zi" d="M1.200 1.200l4.300 4.300 4.300-4.300"/></svg>
  <div class="abs zl" style="left:163px">Видео</div>
  <!-- participants -->
  <svg class="abs" style="left:280px;top:19px" width="27" height="25" viewBox="0 0 27 25"><g class="zi"><circle cx="8" cy="5.500" r="3.600"/><circle cx="19" cy="9" r="3.300"/><path d="M1.500 22.500v-3.500c0-3.500 2.500-6 6.500-6 2 0 3.500.6 4.600 1.700M12 22.500v-1.800c0-3 2.600-5 7-5s6.500 2 6.500 5v1.800z"/><path d="M1.500 22.500h7"/></g></svg>
  <div class="abs" style="left:316px;top:9px;font-size:14px;line-height:16px;color:#d0d0d0">61</div>
  <svg class="abs" style="left:347.500px;top:28px" width="11" height="7" viewBox="0 0 11 7"><path class="zi" d="M1.200 1.200l4.300 4.300 4.300-4.300"/></svg>
  <div class="abs zl" style="left:293px">Участники</div>
  <!-- chat -->
  <svg class="abs" style="left:415px;top:15px" width="30" height="31" viewBox="0 0 30 31"><g class="zi"><path d="M8.500 8V6.500c0-2.500 2-4.500 4.500-4.500h10.500c2.500 0 4.500 2 4.500 4.500V14c0 2.500-1.800 4.300-4 4.500"/><path d="M6 8.500h11.500c2.500 0 4.500 2 4.500 4.500v6.500c0 2.500-2 4.500-4.500 4.500H12l-5 4.500V24H6c-2.500 0-4.500-2-4.500-4.500V13c0-2.500 2-4.500 4.500-4.500z"/></g><g fill="#fff"><circle cx="7.300" cy="16.300" r="1.300"/><circle cx="11.800" cy="16.300" r="1.300"/><circle cx="16.300" cy="16.300" r="1.300"/></g></svg>
  <svg class="abs" style="left:467.500px;top:28px" width="11" height="7" viewBox="0 0 11 7"><path class="zi" d="M1.200 1.200l4.300 4.300 4.300-4.300"/></svg>
  <div class="abs zl" style="left:430.500px">Чат</div>
  <!-- share -->
  <div class="abs" style="left:528px;top:19px;width:30px;height:24px;border-radius:4.500px;background:#23e57b"></div>
  <svg class="abs" style="left:536px;top:23px" width="14" height="16" viewBox="0 0 14 16"><path d="M7 14.500V3M2 7.500l5-5 5 5" fill="none" stroke="#0d0d0d" stroke-width="2.600" stroke-linecap="round" stroke-linejoin="round"/></svg>
  <svg class="abs" style="left:572.500px;top:28px" width="11" height="7" viewBox="0 0 11 7"><path class="zi" d="M1.200 1.200l4.300 4.300 4.300-4.300"/></svg>
  <div class="abs zl" style="left:542.500px">Поделиться</div>
  <!-- pause -->
  <div class="abs" style="left:640.500px;top:20.500px;width:5.500px;height:20.500px;border-radius:1.500px;background:#fff"></div>
  <div class="abs" style="left:650px;top:20.500px;width:5.500px;height:20.500px;border-radius:1.500px;background:#fff"></div>
  <div class="abs zl" style="left:648px">Пауза</div>
  <!-- layout -->
  <svg class="abs" style="left:737px;top:18px" width="36" height="27" viewBox="0 0 36 27"><rect x="2.500" y="2.500" width="31" height="22" rx="3" fill="none" stroke="#fff" stroke-width="2.200"/><circle cx="12.500" cy="10.500" r="3.500" fill="#fff"/><path d="M4.500 23.500c.5-5 3.500-7.500 8-7.500s7.500 2.500 8 7.500z" fill="#fff"/></svg>
  <div class="abs zl" style="left:754.500px">Компоновка</div>
  <!-- annotate -->
  <svg class="abs" style="left:861px;top:14px" width="30" height="33" viewBox="0 0 30 33"><g class="zi" stroke-width="1.900"><path d="M4 25l1.500-6.500L20.500 3.500a2 2 0 0 1 2.800 0l2.700 2.700a2 2 0 0 1 0 2.800L11 24z"/><path d="M17.500 6.500l5.500 5.500"/><path d="M2 31h26"/></g></svg>
  <div class="abs zl" style="left:877px">Комментировать</div>
  <!-- remote control -->
  <svg class="abs" style="left:1042px;top:15px" width="25" height="32" viewBox="0 0 25 32"><rect x="2.500" y="2" width="20" height="27.500" rx="10" fill="none" stroke="#fff" stroke-width="2.200"/><rect x="11" y="7.500" width="3" height="6.500" rx="1.500" fill="#fff"/></svg>
  <div class="abs zl" style="left:1055px">Дистанционное управление</div>
  <!-- show meeting -->
  <svg class="abs" style="left:1242px;top:18px" width="33" height="26" viewBox="0 0 33 26"><path d="M4 1.500h20a3.500 3.500 0 0 1 3.500 3.500v5H16a4 4 0 0 0-4 4v5.500H4A3.500 3.500 0 0 1 .5 16V5A3.500 3.500 0 0 1 4 1.500z" fill="#fff"/><rect x="14.500" y="11.500" width="17" height="12" rx="3" fill="none" stroke="#fff" stroke-width="2"/></svg>
  <div class="abs zl" style="left:1257.500px">Показать конференцию</div>
  <!-- more -->
  <svg class="abs" style="left:1402px;top:15px" width="32" height="32" viewBox="0 0 32 32"><circle cx="16" cy="16" r="14" fill="none" stroke="#fff" stroke-width="1.900"/><g fill="#fff"><circle cx="9.500" cy="16" r="1.500"/><circle cx="16" cy="16" r="1.500"/><circle cx="22.500" cy="16" r="1.500"/></g></svg>
  <div class="abs zl" style="left:1418px">Дополнительно</div>
 </div>
</div>

<!-- green notice + red stop-share -->
<div class="abs" style="left:535px;top:80px;width:418px;height:45px;background:#23d95a;border-radius:0 0 0 9px"></div>
<svg class="abs" style="left:551px;top:87px" width="16" height="16" viewBox="0 0 16 16"><path d="M14.500 1.500C9 .8 5 3.500 4 8L1.500 9.800l3 1.200-.8 3.500c5-1 7-4 6.500-7.500 1.500-.5 3.500-3 4.300-5.500z" fill="#0c5a1c"/></svg>
<div class="abs" style="left:592.500px;top:86px;font-size:14.500px;line-height:18px;font-weight:bold;color:#0f3a21;white-space:nowrap">Вы запустили демонстрацию экрана</div>
<svg class="abs" style="left:894px;top:87px" width="14" height="16" viewBox="0 0 14 16"><path d="M7 .5l6 2.300v4.700c0 4-2.500 6.500-6 8-3.500-1.500-6-4-6-8V2.800z" fill="#0c5a1c"/><path d="M4 7.800l2.300 2.300 4-4.300" fill="none" stroke="#23d95a" stroke-width="1.500"/></svg>
<svg class="abs" style="left:739px;top:110px" width="11" height="7" viewBox="0 0 11 7"><path d="M1 1l4.500 4.500L10 1" fill="none" stroke="#5b9a74" stroke-width="1.800"/></svg>
<div class="abs" style="left:953px;top:80px;width:334.500px;height:28.500px;background:#e1242b;border-radius:0 0 9px 0"></div>
<div class="abs" style="left:962px;top:86.500px;width:11.500px;height:10.500px;background:#e9fbff;border-radius:1.500px"></div>
<div class="abs" style="left:984px;top:85px;font-size:13px;line-height:18px;font-weight:bold;color:#fff;white-space:nowrap;letter-spacing:.54px">Остановить совместное использование</div>


<!-- ===== bottom lines / misc ===== -->
<svg class="abs" style="left:1894px;top:169px" width="7" height="6" viewBox="0 0 7 6"><path d="M.5 5L4 1.500 7.500 5" fill="none" stroke="#666" stroke-width="1.200"/></svg>
<div class="abs" style="left:291px;top:1000px;width:1610px;height:1px;background:#c9c9c9"></div>
<div class="abs" style="left:0;top:1002.500px;width:1901px;height:1px;background:#cdcdcd"></div>
<div class="abs" style="left:1520px;top:1003px;width:40px;height:2px;background:#cfcfcf"></div>
<div class="abs" style="left:1899px;top:610px;width:2px;height:50px;background:#b9b9b9"></div>

<!-- ===== Windows activation watermark ===== -->
<div class="abs" style="left:1421px;top:902px;font-size:24.500px;line-height:30px;color:rgba(95,95,95,.42);white-space:nowrap;letter-spacing:.31px">Активация Windows</div>
<div class="abs" style="left:1421px;top:933.600px;font-size:16.800px;line-height:25.300px;color:rgba(95,95,95,.42);white-space:nowrap;letter-spacing:.48px">Чтобы активировать Windows, перейдите в раздел<br>"Параметры".</div>

<!-- ===== Zoom floating video window ===== -->
<div class="abs" style="left:1606px;top:140px;width:286px;height:195.500px;background:#0d0d0d;border-radius:5px 5px 2px 2px;box-shadow:0 2px 9px rgba(0,0,0,.35)"></div>
<div class="abs" style="left:1616.500px;top:161.500px;width:15.500px;height:4px;border-radius:1.500px;background:#d2d2d2"></div>
<div class="abs" style="left:1651.500px;top:155.500px;width:15px;height:10px;border-radius:2px;background:#2d8cff"></div>
<div class="abs" style="left:1686px;top:150.500px;width:15.500px;height:6px;border-radius:1.500px;background:#c9c9c9"></div>
<div class="abs" style="left:1686px;top:159.500px;width:15.500px;height:6px;border-radius:1.500px;background:#c9c9c9"></div>
<svg class="abs" style="left:1720px;top:149px" width="19" height="19" viewBox="0 0 19 19"><g fill="#d2d2d2"><rect x=".3" y=".3" width="5" height="5" rx="1.200"/><rect x="6.700" y=".3" width="5" height="5" rx="1.200"/><rect x="13.100" y=".3" width="5" height="5" rx="1.200"/><rect x=".3" y="6.700" width="5" height="5" rx="1.200"/><rect x="6.700" y="6.700" width="5" height="5" rx="1.200"/><rect x="13.100" y="6.700" width="5" height="5" rx="1.200"/><rect x=".3" y="13.100" width="5" height="5" rx="1.200"/><rect x="6.700" y="13.100" width="5" height="5" rx="1.200"/><rect x="13.100" y="13.100" width="5" height="5" rx="1.200"/></g></svg>
<svg class="abs" style="left:1864px;top:147px" width="22" height="22" viewBox="0 0 22 22"><path d="M13 1.500h7.500V9M20 2L2 20M1.500 13v7.500H9" fill="none" stroke="#c4c4c4" stroke-width="1.300"/></svg>
<svg class="abs" style="left:1609px;top:175px" width="280.500" height="157.500" viewBox="0 0 280.500 157.500">
  <defs>
    <linearGradient id="vw" x1="0" y1="0" x2="1" y2="0"><stop offset="0" stop-color="#aaa095"/><stop offset=".35" stop-color="#bcb1a4"/><stop offset=".6" stop-color="#c7c0b7"/><stop offset="1" stop-color="#d5d2ce"/></linearGradient>
    <linearGradient id="vv" x1="0" y1="0" x2="0" y2="1"><stop offset="0" stop-color="#000" stop-opacity=".22"/><stop offset=".25" stop-color="#000" stop-opacity="0"/><stop offset=".7" stop-color="#fff" stop-opacity="0"/><stop offset="1" stop-color="#fff" stop-opacity=".3"/></linearGradient>
    <radialGradient id="vr" cx="85%" cy="95%" r="45%"><stop offset="0" stop-color="#f2f2f4" stop-opacity=".95"/><stop offset="1" stop-color="#f2f2f4" stop-opacity="0"/></radialGradient>
    <radialGradient id="vl" cx="0%" cy="8%" r="45%"><stop offset="0" stop-color="#6f6a64" stop-opacity=".55"/><stop offset="1" stop-color="#6f6a64" stop-opacity="0"/></radialGradient>
    <filter id="vb" x="-5%" y="-5%" width="110%" height="110%"><feGaussianBlur stdDeviation=".55"/></filter>
    <clipPath id="vc"><rect x="0" y="0" width="280.500" height="157.500"/></clipPath>
  </defs>
  <g clip-path="url(#vc)">
  <rect width="280.500" height="157.500" fill="url(#vw)"/>
  <rect width="280.500" height="157.500" fill="url(#vv)"/>
  <rect width="280.500" height="157.500" fill="url(#vr)"/>
  <rect width="280.500" height="157.500" fill="url(#vl)"/>
  <!-- shadow behind person -->
  <g filter="url(#vb)">
  <!-- neck -->
  <path d="M108 86h32l2 18-18 6-18-6z" fill="#b8917e"/>
  <!-- sweater -->
  <path d="M67 158c2-18 5-32 11-43 8-8 20-11 30-16 5 3 10 5 16 5s12-2 18-7c10 3 22 5 31 11 9 8 14 28 19 50z" fill="#515556"/>
  <path d="M108 99c5 3.500 10 5.500 16 5.500s12-2.500 18-7.500l2.500 4.500c-6 6-13 8.500-20 8.500s-14-3-19-7z" fill="#5e6263"/>
  <path d="M80 113c-5 12-8 28-9 45M173 108c8 12 12 30 15 50" stroke="#46494a" stroke-width="1.200" fill="none"/>
  <!-- hair back -->
  <path d="M121 34c-14 0-24 10-25 26-.5 12 .5 22-1 31 5 1.500 10-.5 12-5h32c2 4 6 5.500 9 4.500 1-8 1.500-18 0-30-2-16-12-26.500-27-26.500z" fill="#402b24"/>
  <!-- face -->
  <path d="M101.500 62c0-12 8-19 20-19s19.500 7 19.500 19c0 10-1 19-6 26-4 5-8 7-13.500 7s-10-3-13.500-8c-5-7-6.500-15-6.500-25z" fill="#c9a28f"/>
  <!-- fringe -->
  <path d="M98 63c-1-17 8-27 23-27 16 0 25 10 25 26-5-3.500-9-5-14-5.500-11-1-23 1.500-34 6.500z" fill="#4a332b"/>
  <path d="M96 60c-1 10 0 21-.5 31 4.500 0 7.500-3 8.500-8-2-6-3-14-3-22zM145.500 60c.5 8 .5 19-2.500 27 2 2.500 4 3.500 6.500 3 0-8 .5-20-1-30z" fill="#402b24"/>
  <!-- glasses -->
  <g fill="#e6dcd6" fill-opacity=".4" stroke="#17110f" stroke-width="1.900"><rect x="101.500" y="57" width="17" height="12" rx="3.500"/><rect x="123" y="56.500" width="17" height="12" rx="3.500"/></g>
  <path d="M118.500 61.500h4.500" stroke="#17110f" stroke-width="1.500"/>
  <!-- mouth / nose -->
  <path d="M114 80.500c3.500-2 8.500-2 12 0-1.500 3.500-10 3.500-12 0z" fill="#a86a66"/>
  <path d="M119 70l-1 5.500 4.500.5" stroke="#ad8673" stroke-width="1" fill="none"/>
  </g>
  <!-- name tag -->
  <rect x="3.500" y="131" width="137" height="24.500" rx="6" fill="#3a3a3a" fill-opacity=".62"/>
  <text x="8" y="148.800" font-family="Liberation Sans, sans-serif" font-size="14.600" fill="#fff" textLength="127" lengthAdjust="spacing">Nataliia Gavkalova</text>
  </g>
</svg>

<!-- ===== Zoom annotate floating button ===== -->
<div class="abs" style="left:18.500px;top:966px;width:39.500px;height:39.500px;border-radius:50%;background:#1c1c1c"></div>
<svg class="abs" style="left:28px;top:975px" width="22" height="24" viewBox="0 0 22 24"><g fill="none" stroke="#23d95a" stroke-width="1.700" stroke-linejoin="round" stroke-linecap="round"><path d="M3.500 17l1-4.500L14.500 2.500a1.600 1.600 0 0 1 2.200 0l1.800 1.800a1.600 1.600 0 0 1 0 2.200L8.500 16.500z"/><path d="M12.500 4.500l4 4"/><path d="M2 21.500h17"/></g></svg>
</body>
</html>
